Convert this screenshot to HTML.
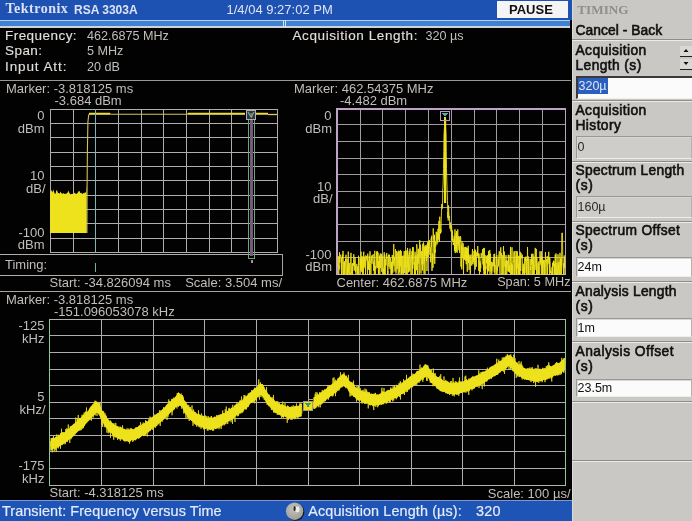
<!DOCTYPE html>
<html><head><meta charset="utf-8"><style>
html,body{margin:0;padding:0;}
body{width:692px;height:521px;overflow:hidden;background:#030202;position:relative;font-family:"Liberation Sans",sans-serif;}
.t{position:absolute;white-space:nowrap;}
</style></head><body>
<div id="root" style="position:absolute;left:0;top:0;width:692px;height:521px;overflow:hidden;filter:blur(0.3px)">
<svg width="692" height="521" viewBox="0 0 692 521" style="position:absolute;left:0;top:0" shape-rendering="crispEdges"><rect x="0.00" y="0.00" width="572.00" height="20.00" fill="#1d52b3"/><rect x="497.00" y="1.00" width="71.00" height="17.00" fill="#f4f4f6"/><rect x="0.00" y="20.00" width="570.00" height="1.00" fill="#b4cff0"/><rect x="0.00" y="21.00" width="570.00" height="5.00" fill="#3f82d4"/><rect x="0.00" y="26.00" width="570.00" height="2.00" fill="#cfd2d6"/><rect x="283.00" y="20.00" width="1.00" height="7.00" fill="#d8e0e8"/><rect x="285.00" y="20.00" width="1.00" height="7.00" fill="#d8e0e8"/><rect x="0.00" y="79.50" width="571.00" height="1.20" fill="#9a9794"/><rect x="50.00" y="109.00" width="1.00" height="144.00" fill="#b0adab"/><rect x="73.00" y="109.00" width="1.00" height="144.00" fill="#b0adab"/><rect x="95.00" y="109.00" width="1.00" height="144.00" fill="#b0adab"/><rect x="118.00" y="109.00" width="1.00" height="144.00" fill="#b0adab"/><rect x="141.00" y="109.00" width="1.00" height="144.00" fill="#b0adab"/><rect x="163.00" y="109.00" width="1.00" height="144.00" fill="#b0adab"/><rect x="186.00" y="109.00" width="1.00" height="144.00" fill="#b0adab"/><rect x="209.00" y="109.00" width="1.00" height="144.00" fill="#b0adab"/><rect x="231.00" y="109.00" width="1.00" height="144.00" fill="#b0adab"/><rect x="254.00" y="109.00" width="1.00" height="144.00" fill="#b0adab"/><rect x="277.00" y="109.00" width="1.00" height="144.00" fill="#b0adab"/><rect x="50.00" y="109.00" width="228.00" height="1.00" fill="#b0adab"/><rect x="50.00" y="123.00" width="228.00" height="1.00" fill="#b0adab"/><rect x="50.00" y="137.00" width="228.00" height="1.00" fill="#b0adab"/><rect x="50.00" y="152.00" width="228.00" height="1.00" fill="#b0adab"/><rect x="50.00" y="166.00" width="228.00" height="1.00" fill="#b0adab"/><rect x="50.00" y="180.00" width="228.00" height="1.00" fill="#b0adab"/><rect x="50.00" y="195.00" width="228.00" height="1.00" fill="#b0adab"/><rect x="50.00" y="209.00" width="228.00" height="1.00" fill="#b0adab"/><rect x="50.00" y="223.00" width="228.00" height="1.00" fill="#b0adab"/><rect x="50.00" y="238.00" width="228.00" height="1.00" fill="#b0adab"/><rect x="50.00" y="252.00" width="228.00" height="1.00" fill="#b0adab"/><rect x="277.00" y="109.00" width="1.00" height="144.00" fill="#b0adab"/><rect x="0.00" y="254.00" width="283.00" height="1.00" fill="#b0adab"/><rect x="0.00" y="275.00" width="283.00" height="1.00" fill="#b0adab"/><rect x="282.00" y="254.00" width="1.00" height="22.00" fill="#a8a4a2"/><rect x="0.00" y="290.80" width="571.00" height="1.20" fill="#a8a4a2"/><rect x="337.00" y="108.00" width="1.00" height="167.00" fill="#bda3c6"/><rect x="360.00" y="108.00" width="1.00" height="167.00" fill="#9f9c9a"/><rect x="382.00" y="108.00" width="1.00" height="167.00" fill="#9f9c9a"/><rect x="405.00" y="108.00" width="1.00" height="167.00" fill="#9f9c9a"/><rect x="428.00" y="108.00" width="1.00" height="167.00" fill="#9f9c9a"/><rect x="451.00" y="108.00" width="1.00" height="167.00" fill="#9f9c9a"/><rect x="474.00" y="108.00" width="1.00" height="167.00" fill="#9f9c9a"/><rect x="496.00" y="108.00" width="1.00" height="167.00" fill="#9f9c9a"/><rect x="519.00" y="108.00" width="1.00" height="167.00" fill="#9f9c9a"/><rect x="542.00" y="108.00" width="1.00" height="167.00" fill="#9f9c9a"/><rect x="565.00" y="108.00" width="1.00" height="167.00" fill="#bda3c6"/><rect x="337.00" y="108.00" width="229.00" height="1.00" fill="#bda3c6"/><rect x="337.00" y="124.00" width="229.00" height="1.00" fill="#9f9c9a"/><rect x="337.00" y="141.00" width="229.00" height="1.00" fill="#9f9c9a"/><rect x="337.00" y="158.00" width="229.00" height="1.00" fill="#9f9c9a"/><rect x="337.00" y="174.00" width="229.00" height="1.00" fill="#9f9c9a"/><rect x="337.00" y="191.00" width="229.00" height="1.00" fill="#9f9c9a"/><rect x="337.00" y="207.00" width="229.00" height="1.00" fill="#9f9c9a"/><rect x="337.00" y="224.00" width="229.00" height="1.00" fill="#9f9c9a"/><rect x="337.00" y="241.00" width="229.00" height="1.00" fill="#9f9c9a"/><rect x="337.00" y="257.00" width="229.00" height="1.00" fill="#9f9c9a"/><rect x="337.00" y="274.00" width="229.00" height="1.00" fill="#bda3c6"/><rect x="336.00" y="108.00" width="2.00" height="167.00" fill="#bda3c6"/><rect x="565.00" y="108.00" width="1.00" height="167.00" fill="#bda3c6"/><rect x="336.00" y="108.00" width="230.00" height="2.00" fill="#bda3c6"/><rect x="101.00" y="319.00" width="1.00" height="167.00" fill="#b0adab"/><rect x="153.00" y="319.00" width="1.00" height="167.00" fill="#b0adab"/><rect x="204.00" y="319.00" width="1.00" height="167.00" fill="#b0adab"/><rect x="256.00" y="319.00" width="1.00" height="167.00" fill="#b0adab"/><rect x="308.00" y="319.00" width="1.00" height="167.00" fill="#b0adab"/><rect x="359.00" y="319.00" width="1.00" height="167.00" fill="#b0adab"/><rect x="411.00" y="319.00" width="1.00" height="167.00" fill="#b0adab"/><rect x="462.00" y="319.00" width="1.00" height="167.00" fill="#b0adab"/><rect x="514.00" y="319.00" width="1.00" height="167.00" fill="#b0adab"/><rect x="49.00" y="335.00" width="517.00" height="1.00" fill="#b0adab"/><rect x="49.00" y="352.00" width="517.00" height="1.00" fill="#b0adab"/><rect x="49.00" y="369.00" width="517.00" height="1.00" fill="#b0adab"/><rect x="49.00" y="385.00" width="517.00" height="1.00" fill="#b0adab"/><rect x="49.00" y="402.00" width="517.00" height="1.00" fill="#b0adab"/><rect x="49.00" y="418.00" width="517.00" height="1.00" fill="#b0adab"/><rect x="49.00" y="435.00" width="517.00" height="1.00" fill="#b0adab"/><rect x="49.00" y="451.00" width="517.00" height="1.00" fill="#b0adab"/><rect x="49.00" y="468.00" width="517.00" height="1.00" fill="#b0adab"/><rect x="49.00" y="319.00" width="517.00" height="1.00" fill="#b0b4ac"/><rect x="49.00" y="485.00" width="517.00" height="1.00" fill="#b0b4ac"/><rect x="49.00" y="319.00" width="1.00" height="167.00" fill="#90c49a"/><rect x="565.00" y="319.00" width="1.00" height="167.00" fill="#90c49a"/><rect x="0.00" y="500.00" width="572.00" height="21.00" fill="#1e54b6"/><rect x="0.00" y="500.00" width="572.00" height="1.00" fill="#7f98cc"/><polygon points="50,233 50.0,189.2 50.8,192.6 51.6,189.7 52.4,192.6 53.2,189.4 54.0,191.5 54.8,193.8 55.6,193.7 56.4,189.9 57.2,190.7 58.0,193.1 58.8,192.9 59.6,193.8 60.4,191.4 61.2,192.9 62.0,193.4 62.8,193.7 63.6,193.1 64.4,193.9 65.2,193.6 66.0,194.3 66.8,193.1 67.6,192.7 68.4,190.5 69.2,192.6 70.0,194.0 70.8,194.3 71.6,193.9 72.4,193.7 73.2,194.2 74.0,193.4 74.8,192.6 75.6,193.8 76.4,194.1 77.2,193.3 78.0,192.5 78.8,190.7 79.6,191.3 80.4,193.3 81.2,192.7 82.0,193.6 82.8,194.1 83.6,193.1 84.4,193.2 85.2,191.9 86.0,193.0 86.7,185 86.7,233" fill="#eee21c" shape-rendering="auto"/><path d="M86.9 233 L87.1 186 L87.4 150 L87.9 122 L88.7 115 L90 113.8 L110 113.8 L111 114.3 L187 114.3 L188 113.8 L245 113.8" stroke="#cfc55a" stroke-width="1.1" fill="none" shape-rendering="auto"/><path d="M89 113.7 L110 113.7 M188 113.7 L245 113.7 M256 113.7 L268 113.7" stroke="#e8dc40" stroke-width="1.9" fill="none" shape-rendering="auto"/><path d="M268 114.5 L277 114.5" stroke="#d8ce50" stroke-width="1.3" fill="none" shape-rendering="auto"/><rect x="95.00" y="109.00" width="1.00" height="142.00" fill="#7fb3b3"/><rect x="95.00" y="263.00" width="1.00" height="9.00" fill="#70b0a8"/><rect x="248.00" y="119.00" width="1.00" height="140.00" fill="#6aa878"/><rect x="254.00" y="119.00" width="1.00" height="140.00" fill="#6aa878"/><rect x="248.00" y="258.00" width="7.00" height="1.00" fill="#6aa878"/><rect x="250.00" y="119.00" width="3.00" height="137.00" fill="#765a7e"/><rect x="251.00" y="260.00" width="2.00" height="3.00" fill="#c080a8"/><rect x="246.5" y="110.5" width="9" height="8.5" fill="#2a3a3a" stroke="#b8aab8" stroke-width="1"/><path d="M248 112 L251 117 M254 112 L251 117" stroke="#70b890" stroke-width="1.2" fill="none" shape-rendering="auto"/><path d="M250 114 L252.5 114 L251.5 118" stroke="#b080a8" stroke-width="1" fill="none" shape-rendering="auto"/><polyline points="338.00,267.28 338.25,256.24 338.50,262.25 338.75,274.50 339.00,265.51 339.25,269.44 339.50,252.31 339.75,262.73 340.00,257.36 340.25,256.80 340.50,255.39 340.75,254.69 341.00,256.39 341.25,267.87 341.50,274.50 341.75,257.63 342.00,274.50 342.25,264.75 342.50,254.47 342.75,258.24 343.00,250.90 343.25,256.38 343.50,274.50 343.75,269.92 344.00,262.15 344.25,274.50 344.50,261.37 344.75,272.94 345.00,274.05 345.25,273.12 345.50,259.36 345.75,261.90 346.00,254.76 346.25,274.50 346.50,274.50 346.75,274.50 347.00,259.23 347.25,258.80 347.50,274.50 347.75,264.60 348.00,272.59 348.25,251.59 348.50,264.57 348.75,274.50 349.00,274.50 349.25,262.85 349.50,270.61 349.75,274.50 350.00,272.76 350.25,274.50 350.50,261.75 350.75,257.68 351.00,252.87 351.25,263.54 351.50,273.28 351.75,274.50 352.00,267.10 352.25,263.21 352.50,274.50 352.75,267.02 353.00,263.24 353.25,265.07 353.50,265.58 353.75,254.26 354.00,258.33 354.25,270.58 354.50,261.21 354.75,266.33 355.00,257.27 355.25,259.68 355.50,271.80 355.75,266.47 356.00,274.50 356.25,267.71 356.50,265.29 356.75,263.91 357.00,264.49 357.25,269.88 357.50,274.50 357.75,266.40 358.00,273.60 358.25,274.50 358.50,255.69 358.75,274.50 359.00,274.50 359.25,274.50 359.50,274.50 359.75,274.50 360.00,258.10 360.25,265.34 360.50,258.68 360.75,270.44 361.00,251.63 361.25,267.95 361.50,256.65 361.75,272.18 362.00,257.20 362.25,256.35 362.50,260.04 362.75,274.50 363.00,259.81 363.25,274.50 363.50,256.97 363.75,251.76 364.00,268.19 364.25,256.88 364.50,256.65 364.75,263.88 365.00,266.19 365.25,259.95 365.50,274.50 365.75,255.44 366.00,260.62 366.25,260.31 366.50,258.22 366.75,255.99 367.00,255.95 367.25,265.97 367.50,274.50 367.75,253.63 368.00,262.31 368.25,269.28 368.50,261.21 368.75,269.73 369.00,262.49 369.25,256.18 369.50,274.50 369.75,257.73 370.00,251.27 370.25,259.09 370.50,263.59 370.75,274.50 371.00,274.50 371.25,259.06 371.50,260.30 371.75,255.50 372.00,263.83 372.25,258.19 372.50,255.46 372.75,256.38 373.00,255.75 373.25,254.22 373.50,270.51 373.75,269.59 374.00,261.78 374.25,274.50 374.50,274.50 374.75,250.81 375.00,272.04 375.25,274.50 375.50,271.80 375.75,266.13 376.00,268.57 376.25,258.41 376.50,251.53 376.75,265.44 377.00,267.07 377.25,263.77 377.50,251.32 377.75,267.84 378.00,252.50 378.25,269.60 378.50,274.50 378.75,261.28 379.00,268.37 379.25,266.67 379.50,255.70 379.75,274.50 380.00,265.41 380.25,253.51 380.50,268.05 380.75,264.14 381.00,262.96 381.25,253.78 381.50,254.88 381.75,271.74 382.00,262.50 382.25,257.60 382.50,257.59 382.75,256.40 383.00,274.50 383.25,274.50 383.50,268.54 383.75,273.71 384.00,254.76 384.25,252.30 384.50,274.50 384.75,254.52 385.00,272.01 385.25,274.50 385.50,258.86 385.75,260.97 386.00,265.48 386.25,261.71 386.50,254.82 386.75,252.94 387.00,258.28 387.25,256.87 387.50,274.50 387.75,271.07 388.00,273.83 388.25,264.35 388.50,254.68 388.75,262.03 389.00,266.63 389.25,254.62 389.50,255.67 389.75,259.63 390.00,268.97 390.25,257.93 390.50,258.70 390.75,260.63 391.00,274.50 391.25,262.90 391.50,273.37 391.75,261.78 392.00,274.50 392.25,254.93 392.50,257.72 392.75,272.75 393.00,260.86 393.25,263.38 393.50,259.24 393.75,244.17 394.00,265.88 394.25,256.81 394.50,257.39 394.75,261.47 395.00,271.52 395.25,253.88 395.50,249.23 395.75,253.69 396.00,273.61 396.25,271.62 396.50,257.24 396.75,251.01 397.00,268.00 397.25,269.11 397.50,263.71 397.75,252.38 398.00,258.20 398.25,274.50 398.50,254.77 398.75,250.55 399.00,264.80 399.25,251.13 399.50,272.15 399.75,256.74 400.00,274.26 400.25,258.10 400.50,249.97 400.75,266.32 401.00,256.50 401.25,251.18 401.50,274.50 401.75,256.05 402.00,258.06 402.25,256.48 402.50,268.60 402.75,273.80 403.00,255.64 403.25,260.19 403.50,273.66 403.75,274.50 404.00,254.81 404.25,251.09 404.50,267.72 404.75,273.08 405.00,255.46 405.25,267.94 405.50,250.91 405.75,254.89 406.00,250.84 406.25,274.50 406.50,269.44 406.75,259.70 407.00,250.34 407.25,274.50 407.50,247.94 407.75,251.59 408.00,266.86 408.25,257.09 408.50,272.40 408.75,255.36 409.00,256.33 409.25,251.32 409.50,270.84 409.75,271.49 410.00,248.62 410.25,257.29 410.50,258.14 410.75,270.67 411.00,274.50 411.25,266.24 411.50,255.56 411.75,256.17 412.00,251.01 412.25,274.50 412.50,247.24 412.75,268.63 413.00,253.71 413.25,247.21 413.50,252.93 413.75,261.33 414.00,264.48 414.25,262.23 414.50,274.50 414.75,255.20 415.00,251.70 415.25,252.44 415.50,274.50 415.75,255.30 416.00,257.71 416.25,265.19 416.50,270.14 416.75,244.20 417.00,248.54 417.25,249.49 417.50,274.50 417.75,253.99 418.00,255.57 418.25,263.57 418.50,248.79 418.75,259.32 419.00,271.10 419.25,274.50 419.50,249.98 419.75,240.32 420.00,249.78 420.25,256.97 420.50,244.82 420.75,247.68 421.00,273.52 421.25,251.25 421.50,251.25 421.75,252.07 422.00,264.40 422.25,252.01 422.50,270.44 422.75,243.78 423.00,264.51 423.25,247.77 423.50,242.40 423.75,243.65 424.00,273.65 424.25,246.53 424.50,261.79 424.75,247.77 425.00,274.50 425.25,245.21 425.50,250.87 425.75,256.00 426.00,245.94 426.25,246.74 426.50,261.06 426.75,245.49 427.00,271.01 427.25,243.97 427.50,256.73 427.75,242.32 428.00,257.03 428.25,240.84 428.50,253.14 428.75,248.00 429.00,247.85 429.25,248.04 429.50,240.22 429.75,248.47 430.00,254.99 430.25,247.20 430.50,262.23 430.75,261.78 431.00,247.57 431.25,237.71 431.50,247.05 431.75,235.69 432.00,270.85 432.25,253.35 432.50,263.65 432.75,254.94 433.00,267.77 433.25,228.36 433.50,239.35 433.75,236.94 434.00,252.33 434.25,259.80 434.50,234.80 434.75,263.81 435.00,249.59 435.25,252.46 435.50,242.42 435.75,246.46 436.00,239.78 436.25,231.75 436.50,239.13 436.75,241.48 437.00,244.41 437.25,232.43 437.50,232.94 437.75,242.40 438.00,228.92 438.25,239.68 438.50,233.35 438.75,224.63 439.00,220.92 439.25,233.93 439.50,241.94 439.75,216.70 440.00,220.72 440.25,223.63 440.50,233.60 440.75,229.27 441.00,232.46 441.25,219.30 441.50,211.14 441.75,204.19 442.00,208.01 442.25,208.55 442.50,207.89 442.75,189.00 443.00,186.11 443.25,179.17 443.50,168.33 443.75,151.67 444.00,135.00 444.25,130.75 444.50,126.50 444.75,122.25 445.00,118.00 445.25,122.25 445.50,126.50 445.75,130.75 446.00,135.00 446.25,151.67 446.50,168.33 446.75,179.17 447.00,186.11 447.25,192.99 447.50,200.71 447.75,217.72 448.00,212.01 448.25,220.50 448.50,205.42 448.75,207.94 449.00,217.85 449.25,215.84 449.50,216.67 449.75,225.79 450.00,228.65 450.25,222.45 450.50,225.78 450.75,228.31 451.00,231.42 451.25,226.48 451.50,225.31 451.75,228.03 452.00,239.87 452.25,230.56 452.50,231.28 452.75,241.86 453.00,238.68 453.25,245.09 453.50,243.16 453.75,244.39 454.00,242.55 454.25,235.82 454.50,251.08 454.75,234.81 455.00,229.36 455.25,253.07 455.50,244.83 455.75,247.53 456.00,233.28 456.25,252.17 456.50,231.08 456.75,234.81 457.00,251.76 457.25,252.60 457.50,240.90 457.75,229.45 458.00,244.37 458.25,236.16 458.50,242.87 458.75,247.15 459.00,250.17 459.25,236.49 459.50,252.91 459.75,242.24 460.00,240.47 460.25,241.98 460.50,236.24 460.75,237.87 461.00,266.77 461.25,244.70 461.50,245.43 461.75,269.40 462.00,241.30 462.25,258.09 462.50,247.99 462.75,249.09 463.00,243.71 463.25,243.26 463.50,274.50 463.75,249.86 464.00,247.22 464.25,253.85 464.50,259.66 464.75,250.31 465.00,246.95 465.25,257.97 465.50,247.39 465.75,261.05 466.00,246.89 466.25,264.27 466.50,248.17 466.75,259.62 467.00,247.74 467.25,271.82 467.50,248.05 467.75,248.63 468.00,260.78 468.25,245.79 468.50,262.72 468.75,253.95 469.00,269.88 469.25,269.11 469.50,263.02 469.75,255.85 470.00,255.09 470.25,273.96 470.50,266.61 470.75,257.99 471.00,254.55 471.25,261.91 471.50,263.37 471.75,265.58 472.00,260.15 472.25,252.76 472.50,249.07 472.75,264.09 473.00,260.26 473.25,255.50 473.50,260.26 473.75,261.70 474.00,251.02 474.25,264.58 474.50,257.50 474.75,249.21 475.00,251.05 475.25,269.42 475.50,250.32 475.75,259.20 476.00,258.62 476.25,266.74 476.50,256.51 476.75,252.59 477.00,256.32 477.25,251.33 477.50,255.73 477.75,246.10 478.00,257.33 478.25,255.96 478.50,253.55 478.75,270.80 479.00,253.65 479.25,257.21 479.50,274.50 479.75,263.07 480.00,261.40 480.25,272.07 480.50,263.49 480.75,268.19 481.00,255.89 481.25,252.98 481.50,257.32 481.75,255.66 482.00,255.50 482.25,254.37 482.50,249.19 482.75,260.56 483.00,264.45 483.25,258.18 483.50,270.33 483.75,247.97 484.00,274.50 484.25,247.94 484.50,253.92 484.75,274.50 485.00,254.91 485.25,269.26 485.50,274.50 485.75,266.09 486.00,269.22 486.25,255.76 486.50,262.77 486.75,260.67 487.00,263.38 487.25,256.50 487.50,274.50 487.75,254.98 488.00,262.12 488.25,271.41 488.50,250.92 488.75,270.83 489.00,260.40 489.25,254.08 489.50,265.56 489.75,249.94 490.00,274.50 490.25,261.97 490.50,253.68 490.75,265.38 491.00,271.58 491.25,261.82 491.50,269.17 491.75,274.50 492.00,270.70 492.25,270.75 492.50,262.58 492.75,262.67 493.00,266.28 493.25,258.84 493.50,258.22 493.75,265.84 494.00,254.01 494.25,272.48 494.50,254.16 494.75,253.76 495.00,274.50 495.25,269.94 495.50,265.40 495.75,265.79 496.00,265.06 496.25,256.78 496.50,261.83 496.75,255.00 497.00,274.50 497.25,266.63 497.50,271.01 497.75,264.36 498.00,258.61 498.25,258.96 498.50,266.37 498.75,254.53 499.00,254.38 499.25,251.19 499.50,254.17 499.75,265.23 500.00,274.50 500.25,261.10 500.50,252.04 500.75,247.34 501.00,255.14 501.25,255.75 501.50,253.03 501.75,274.50 502.00,272.23 502.25,255.18 502.50,268.39 502.75,274.42 503.00,274.50 503.25,254.43 503.50,246.21 503.75,269.00 504.00,274.50 504.25,251.57 504.50,256.25 504.75,260.38 505.00,266.56 505.25,260.90 505.50,274.50 505.75,265.07 506.00,255.15 506.25,268.51 506.50,259.86 506.75,274.50 507.00,266.00 507.25,261.98 507.50,260.87 507.75,266.07 508.00,271.39 508.25,254.75 508.50,261.94 508.75,271.67 509.00,255.16 509.25,271.59 509.50,265.48 509.75,272.70 510.00,268.32 510.25,260.45 510.50,246.94 510.75,274.50 511.00,266.44 511.25,263.11 511.50,274.50 511.75,263.02 512.00,247.30 512.25,274.14 512.50,264.51 512.75,266.14 513.00,274.50 513.25,261.01 513.50,261.88 513.75,257.01 514.00,251.43 514.25,271.32 514.50,274.50 514.75,255.37 515.00,250.92 515.25,259.12 515.50,262.54 515.75,270.90 516.00,274.50 516.25,255.66 516.50,274.50 516.75,251.03 517.00,274.50 517.25,251.44 517.50,259.20 517.75,267.79 518.00,268.54 518.25,263.25 518.50,274.50 518.75,255.85 519.00,261.21 519.25,274.50 519.50,256.00 519.75,269.69 520.00,274.50 520.25,251.87 520.50,260.24 520.75,271.02 521.00,253.13 521.25,257.89 521.50,257.50 521.75,255.83 522.00,258.40 522.25,254.69 522.50,274.50 522.75,274.50 523.00,273.45 523.25,263.71 523.50,272.97 523.75,267.93 524.00,274.50 524.25,266.14 524.50,274.50 524.75,257.94 525.00,273.53 525.25,258.16 525.50,260.97 525.75,257.32 526.00,256.54 526.25,269.04 526.50,274.50 526.75,258.76 527.00,274.50 527.25,274.50 527.50,247.06 527.75,260.49 528.00,256.13 528.25,261.46 528.50,274.50 528.75,258.50 529.00,274.50 529.25,274.50 529.50,274.50 529.75,274.50 530.00,264.87 530.25,258.87 530.50,270.08 530.75,266.96 531.00,274.50 531.25,270.45 531.50,254.38 531.75,264.83 532.00,253.68 532.25,258.53 532.50,262.04 532.75,274.50 533.00,253.84 533.25,274.50 533.50,261.09 533.75,262.36 534.00,256.66 534.25,274.50 534.50,265.32 534.75,265.89 535.00,253.85 535.25,247.91 535.50,254.14 535.75,266.84 536.00,270.00 536.25,248.92 536.50,274.50 536.75,257.53 537.00,257.76 537.25,274.21 537.50,274.50 537.75,274.50 538.00,263.24 538.25,265.64 538.50,274.50 538.75,261.50 539.00,261.43 539.25,274.50 539.50,274.50 539.75,273.87 540.00,251.34 540.25,263.30 540.50,262.05 540.75,256.82 541.00,265.18 541.25,251.29 541.50,268.28 541.75,274.50 542.00,256.42 542.25,260.07 542.50,260.22 542.75,274.50 543.00,259.79 543.25,263.58 543.50,260.51 543.75,268.66 544.00,274.50 544.25,260.14 544.50,265.89 544.75,274.50 545.00,262.99 545.25,259.67 545.50,251.97 545.75,268.75 546.00,274.50 546.25,267.82 546.50,260.99 546.75,259.28 547.00,262.51 547.25,256.25 547.50,274.32 547.75,266.46 548.00,260.49 548.25,260.70 548.50,258.20 548.75,251.80 549.00,263.76 549.25,257.44 549.50,274.50 549.75,258.15 550.00,261.88 550.25,267.94 550.50,273.24 550.75,271.06 551.00,271.61 551.25,272.28 551.50,274.50 551.75,274.50 552.00,267.20 552.25,274.50 552.50,263.31 552.75,274.50 553.00,262.48 553.25,264.20 553.50,260.70 553.75,266.48 554.00,261.28 554.25,274.04 554.50,263.90 554.75,274.50 555.00,267.12 555.25,254.63 555.50,274.50 555.75,274.50 556.00,253.43 556.25,272.02 556.50,274.50 556.75,265.60 557.00,262.72 557.25,267.46 557.50,274.50 557.75,265.80 558.00,254.27 558.25,274.50 558.50,264.91 558.75,268.21 559.00,261.76 559.25,273.17 559.50,274.50 559.75,265.52 560.00,252.84 560.25,274.50 560.50,258.27 560.75,265.50 561.00,258.81 561.25,274.50 561.50,274.50 561.75,233.00 562.00,233.00 562.25,233.00 562.50,233.00 562.75,258.97 563.00,266.51 563.25,268.81 563.50,274.50 563.75,263.25 564.00,274.50 564.25,255.47 564.50,267.97 564.75,256.92" stroke="#eee21c" stroke-width="0.9" fill="none" shape-rendering="auto"/><rect x="444" y="119" width="2.2" height="84" fill="#eee21c" shape-rendering="auto"/><rect x="440.5" y="111.5" width="9" height="9" fill="none" stroke="#b79bc6" stroke-width="1"/><path d="M442 113 L448 113 L445 117 Z" fill="#50b0a8"/><rect x="444.3" y="117" width="1.6" height="3" fill="#eee21c"/><polygon points="50.50,438.07 51.50,438.14 52.50,437.85 53.50,437.38 54.50,438.01 55.50,436.69 56.50,436.27 57.50,436.58 58.50,436.15 59.50,435.04 60.50,433.52 61.50,434.19 62.50,433.61 63.50,431.99 64.50,432.34 65.50,431.61 66.50,429.98 67.50,428.95 68.50,429.22 69.50,428.29 70.50,426.48 71.50,425.67 72.50,424.98 73.50,423.83 74.50,423.38 75.50,421.96 76.50,422.26 77.50,420.39 78.50,419.51 79.50,418.14 80.50,417.65 81.50,417.24 82.50,415.53 83.50,414.28 84.50,414.38 85.50,412.25 86.50,412.08 87.50,411.38 88.50,410.28 89.50,408.02 90.50,406.75 91.50,405.83 92.50,405.21 93.50,403.51 94.50,402.29 95.50,400.97 96.50,401.25 97.50,401.95 98.50,402.80 99.50,403.94 100.50,405.91 101.50,409.26 102.50,410.92 103.50,412.56 104.50,414.12 105.50,414.94 106.50,416.59 107.50,418.65 108.50,419.33 109.50,421.00 110.50,422.13 111.50,422.10 112.50,423.58 113.50,423.83 114.50,425.02 115.50,425.01 116.50,425.77 117.50,426.05 118.50,427.72 119.50,427.86 120.50,427.20 121.50,427.84 122.50,428.49 123.50,428.71 124.50,428.80 125.50,429.70 126.50,429.42 127.50,430.23 128.50,429.16 129.50,430.32 130.50,428.94 131.50,429.56 132.50,428.65 133.50,429.15 134.50,428.95 135.50,427.19 136.50,427.22 137.50,427.43 138.50,425.74 139.50,425.74 140.50,425.61 141.50,425.26 142.50,424.06 143.50,423.84 144.50,422.91 145.50,421.65 146.50,420.85 147.50,421.39 148.50,420.27 149.50,419.71 150.50,418.36 151.50,417.79 152.50,416.78 153.50,415.90 154.50,415.97 155.50,414.49 156.50,414.00 157.50,413.03 158.50,413.04 159.50,411.68 160.50,411.22 161.50,410.25 162.50,409.22 163.50,407.99 164.50,407.67 165.50,405.89 166.50,404.82 167.50,404.00 168.50,403.72 169.50,401.81 170.50,401.40 171.50,399.94 172.50,398.69 173.50,398.87 174.50,397.80 175.50,396.53 176.50,395.37 177.50,393.85 178.50,392.85 179.50,393.82 180.50,394.85 181.50,394.91 182.50,396.45 183.50,399.37 184.50,400.35 185.50,402.50 186.50,404.44 187.50,405.57 188.50,406.74 189.50,406.99 190.50,408.26 191.50,409.59 192.50,410.92 193.50,410.47 194.50,412.15 195.50,412.96 196.50,413.97 197.50,413.84 198.50,414.05 199.50,414.18 200.50,414.76 201.50,416.47 202.50,415.35 203.50,415.94 204.50,415.96 205.50,417.61 206.50,417.20 207.50,417.82 208.50,417.66 209.50,417.84 210.50,418.51 211.50,417.41 212.50,417.72 213.50,417.31 214.50,416.59 215.50,416.85 216.50,417.18 217.50,416.88 218.50,415.88 219.50,414.52 220.50,414.91 221.50,414.34 222.50,413.67 223.50,412.83 224.50,413.20 225.50,411.49 226.50,411.30 227.50,411.02 228.50,410.25 229.50,409.51 230.50,408.63 231.50,407.59 232.50,407.48 233.50,407.26 234.50,405.30 235.50,404.81 236.50,404.53 237.50,403.79 238.50,402.91 239.50,401.42 240.50,400.60 241.50,401.04 242.50,399.96 243.50,398.16 244.50,398.27 245.50,397.57 246.50,395.64 247.50,395.37 248.50,393.78 249.50,392.74 250.50,392.32 251.50,391.74 252.50,390.33 253.50,389.57 254.50,388.92 255.50,387.85 256.50,387.36 257.50,386.16 258.50,385.18 259.50,384.27 260.50,383.19 261.50,384.37 262.50,383.77 263.50,385.27 264.50,388.33 265.50,390.30 266.50,390.86 267.50,392.66 268.50,394.25 269.50,394.61 270.50,397.00 271.50,397.67 272.50,398.85 273.50,398.87 274.50,400.31 275.50,401.49 276.50,400.90 277.50,401.75 278.50,403.48 279.50,402.67 280.50,404.41 281.50,404.17 282.50,404.20 283.50,404.95 284.50,405.64 285.50,405.51 286.50,406.70 287.50,405.60 288.50,406.35 289.50,406.92 290.50,406.71 291.50,407.13 292.50,406.21 293.50,407.63 294.50,406.06 295.50,405.99 296.50,406.05 297.50,405.82 298.50,406.07 299.50,404.21 300.50,404.97 301.50,404.55 301.50,415.92 300.50,416.74 299.50,416.65 298.50,417.73 297.50,417.35 296.50,417.26 295.50,417.59 294.50,418.50 293.50,417.72 292.50,418.51 291.50,418.34 290.50,417.75 289.50,418.22 288.50,418.12 287.50,417.40 286.50,417.81 285.50,416.92 284.50,416.39 283.50,417.32 282.50,416.90 281.50,415.90 280.50,415.79 279.50,414.51 278.50,414.97 277.50,413.91 276.50,413.03 275.50,413.32 274.50,412.15 273.50,411.64 272.50,409.96 271.50,408.84 270.50,407.62 269.50,406.35 268.50,405.10 267.50,404.89 266.50,402.36 265.50,401.50 264.50,398.83 263.50,397.59 262.50,396.27 261.50,395.61 260.50,395.37 259.50,394.74 258.50,396.65 257.50,397.11 256.50,397.83 255.50,400.02 254.50,400.92 253.50,401.91 252.50,402.58 251.50,402.73 250.50,403.35 249.50,404.63 248.50,406.41 247.50,407.31 246.50,408.50 245.50,408.47 244.50,408.88 243.50,411.16 242.50,411.63 241.50,412.14 240.50,412.78 239.50,413.54 238.50,414.63 237.50,414.65 236.50,415.61 235.50,416.79 234.50,417.60 233.50,417.89 232.50,418.38 231.50,420.33 230.50,419.77 229.50,421.17 228.50,421.59 227.50,422.16 226.50,422.32 225.50,423.88 224.50,423.43 223.50,424.50 222.50,425.54 221.50,426.56 220.50,426.01 219.50,427.11 218.50,427.78 217.50,428.46 216.50,428.72 215.50,429.26 214.50,428.57 213.50,428.67 212.50,429.51 211.50,429.22 210.50,430.24 209.50,429.80 208.50,429.13 207.50,429.18 206.50,428.57 205.50,429.11 204.50,428.90 203.50,428.39 202.50,427.59 201.50,426.66 200.50,426.81 199.50,426.76 198.50,426.10 197.50,424.89 196.50,424.85 195.50,424.88 194.50,424.06 193.50,422.91 192.50,421.57 191.50,420.90 190.50,419.93 189.50,419.62 188.50,417.68 187.50,417.24 186.50,414.83 185.50,414.44 184.50,411.78 183.50,411.07 182.50,407.87 181.50,406.50 180.50,406.00 179.50,405.39 178.50,405.91 177.50,406.01 176.50,406.88 175.50,407.40 174.50,409.82 173.50,409.40 172.50,411.86 171.50,411.38 170.50,412.83 169.50,413.75 168.50,414.91 167.50,415.46 166.50,416.19 165.50,417.60 164.50,418.13 163.50,420.08 162.50,420.71 161.50,420.91 160.50,422.39 159.50,422.91 158.50,423.45 157.50,424.54 156.50,426.39 155.50,426.53 154.50,426.88 153.50,428.42 152.50,428.55 151.50,429.47 150.50,429.65 149.50,431.16 148.50,432.55 147.50,432.12 146.50,433.50 145.50,434.27 144.50,435.18 143.50,435.01 142.50,435.03 141.50,436.54 140.50,437.29 139.50,438.15 138.50,438.71 137.50,438.15 136.50,439.39 135.50,439.76 134.50,440.28 133.50,439.82 132.50,440.03 131.50,440.26 130.50,441.84 129.50,441.13 128.50,442.10 127.50,441.30 126.50,441.31 125.50,441.53 124.50,441.45 123.50,440.83 122.50,439.55 121.50,439.61 120.50,439.00 119.50,438.38 118.50,439.03 117.50,437.54 116.50,437.82 115.50,437.57 114.50,436.69 113.50,435.52 112.50,435.16 111.50,433.31 110.50,432.56 109.50,432.77 108.50,431.73 107.50,429.56 106.50,428.03 105.50,426.93 104.50,425.39 103.50,423.84 102.50,421.64 101.50,420.02 100.50,417.65 99.50,415.67 98.50,414.26 97.50,412.93 96.50,412.41 95.50,413.20 94.50,414.95 93.50,415.69 92.50,416.46 91.50,418.45 90.50,419.27 89.50,419.98 88.50,421.17 87.50,421.78 86.50,423.13 85.50,424.16 84.50,425.93 83.50,426.39 82.50,428.04 81.50,427.86 80.50,428.96 79.50,430.75 78.50,431.03 77.50,431.91 76.50,433.10 75.50,433.65 74.50,435.00 73.50,436.10 72.50,437.01 71.50,438.52 70.50,438.38 69.50,439.01 68.50,440.19 67.50,440.69 66.50,442.10 65.50,442.08 64.50,443.20 63.50,444.07 62.50,445.08 61.50,444.93 60.50,446.54 59.50,446.04 58.50,446.92 57.50,447.68 56.50,447.34 55.50,448.45 54.50,449.09 53.50,448.71 52.50,449.16 51.50,450.37 50.50,450.88" fill="#eee21c" shape-rendering="auto"/><polyline points="50.50,446.69 50.75,441.21 51.00,450.07 51.25,447.08 51.50,448.23 51.75,444.26 52.00,441.75 52.25,452.31 52.50,441.20 52.75,443.53 53.00,439.83 53.25,441.35 53.50,436.06 53.75,442.75 54.00,444.41 54.25,451.47 54.50,440.25 54.75,443.84 55.00,440.53 55.25,444.11 55.50,437.85 55.75,450.02 56.00,446.67 56.25,451.32 56.50,448.32 56.75,434.48 57.00,438.48 57.25,437.60 57.50,437.20 57.75,447.15 58.00,436.87 58.25,448.39 58.50,434.82 58.75,446.78 59.00,435.41 59.25,441.35 59.50,442.77 59.75,436.12 60.00,444.14 60.25,438.76 60.50,448.70 60.75,432.98 61.00,437.22 61.25,441.07 61.50,428.72 61.75,440.24 62.00,432.35 62.25,442.35 62.50,432.60 62.75,433.18 63.00,432.21 63.25,437.11 63.50,439.45 63.75,440.32 64.00,435.19 64.25,433.90 64.50,441.41 64.75,434.33 65.00,444.31 65.25,433.50 65.50,443.39 65.75,429.05 66.00,438.69 66.25,434.05 66.50,431.82 66.75,428.23 67.00,428.89 67.25,436.23 67.50,441.88 67.75,429.67 68.00,438.42 68.25,424.50 68.50,430.50 68.75,434.20 69.00,431.65 69.25,433.21 69.50,439.75 69.75,443.00 70.00,431.72 70.25,426.32 70.50,431.43 70.75,439.36 71.00,428.19 71.25,428.57 71.50,427.88 71.75,435.70 72.00,428.48 72.25,427.02 72.50,425.90 72.75,436.51 73.00,434.51 73.25,427.16 73.50,430.03 73.75,424.88 74.00,431.29 74.25,430.79 74.50,424.95 74.75,427.01 75.00,434.43 75.25,434.22 75.50,421.01 75.75,417.58 76.00,422.69 76.25,421.65 76.50,430.32 76.75,424.87 77.00,430.36 77.25,418.90 77.50,431.04 77.75,419.34 78.00,422.05 78.25,414.93 78.50,422.86 78.75,419.64 79.00,419.64 79.25,420.05 79.50,419.34 79.75,424.45 80.00,421.97 80.25,430.32 80.50,419.38 80.75,429.28 81.00,419.76 81.25,430.13 81.50,422.84 81.75,423.32 82.00,414.77 82.25,424.28 82.50,422.44 82.75,428.78 83.00,424.50 83.25,418.17 83.50,427.87 83.75,418.68 84.00,414.74 84.25,412.38 84.50,426.12 84.75,421.07 85.00,415.18 85.25,413.02 85.50,422.91 85.75,411.48 86.00,415.39 86.25,418.54 86.50,407.54 86.75,422.63 87.00,418.39 87.25,412.68 87.50,420.15 87.75,419.40 88.00,416.31 88.25,418.33 88.50,417.32 88.75,410.88 89.00,411.24 89.25,414.13 89.50,414.59 89.75,409.74 90.00,420.20 90.25,413.78 90.50,417.90 90.75,407.88 91.00,411.97 91.25,417.27 91.50,420.54 91.75,416.78 92.00,405.71 92.25,407.38 92.50,408.69 92.75,410.91 93.00,404.03 93.25,417.56 93.50,408.95 93.75,413.96 94.00,403.82 94.25,406.82 94.50,404.57 94.75,405.83 95.00,400.64 95.25,415.39 95.50,410.69 95.75,404.61 96.00,412.26 96.25,409.15 96.50,402.44 96.75,411.51 97.00,415.93 97.25,405.22 97.50,404.20 97.75,409.84 98.00,405.60 98.25,409.30 98.50,403.66 98.75,412.01 99.00,411.73 99.25,403.11 99.50,408.21 99.75,410.59 100.00,401.86 100.25,411.24 100.50,417.53 100.75,412.52 101.00,412.54 101.25,414.16 101.50,417.09 101.75,424.73 102.00,416.32 102.25,420.09 102.50,426.73 102.75,410.87 103.00,421.23 103.25,411.06 103.50,421.47 103.75,411.92 104.00,417.86 104.25,427.09 104.50,425.57 104.75,417.79 105.00,413.18 105.25,417.64 105.50,418.59 105.75,427.25 106.00,422.31 106.25,415.67 106.50,428.40 106.75,428.58 107.00,432.63 107.25,421.88 107.50,423.94 107.75,422.37 108.00,420.15 108.25,433.25 108.50,425.78 108.75,426.55 109.00,422.39 109.25,422.93 109.50,430.96 109.75,425.93 110.00,426.03 110.25,420.39 110.50,437.80 110.75,421.08 111.00,422.95 111.25,428.97 111.50,428.23 111.75,431.14 112.00,424.30 112.25,423.51 112.50,424.64 112.75,423.14 113.00,436.34 113.25,432.09 113.50,436.03 113.75,439.83 114.00,423.26 114.25,427.26 114.50,431.82 114.75,431.66 115.00,437.16 115.25,436.25 115.50,435.77 115.75,422.85 116.00,433.66 116.25,432.36 116.50,431.27 116.75,430.88 117.00,426.23 117.25,426.48 117.50,439.90 117.75,432.88 118.00,430.30 118.25,432.68 118.50,426.67 118.75,438.51 119.00,433.71 119.25,427.73 119.50,439.29 119.75,429.28 120.00,426.42 120.25,440.74 120.50,440.49 120.75,427.00 121.00,433.17 121.25,437.72 121.50,438.50 121.75,427.67 122.00,428.16 122.25,438.77 122.50,425.43 122.75,428.45 123.00,429.06 123.25,432.49 123.50,437.29 123.75,429.87 124.00,432.40 124.25,440.71 124.50,429.78 124.75,440.94 125.00,435.19 125.25,429.51 125.50,430.28 125.75,435.56 126.00,430.92 126.25,431.06 126.50,431.66 126.75,435.68 127.00,428.32 127.25,435.54 127.50,436.81 127.75,431.64 128.00,430.51 128.25,428.64 128.50,436.04 128.75,441.69 129.00,436.93 129.25,437.16 129.50,443.66 129.75,437.15 130.00,428.62 130.25,438.45 130.50,433.08 130.75,434.83 131.00,427.90 131.25,433.93 131.50,428.93 131.75,438.66 132.00,429.73 132.25,429.48 132.50,430.59 132.75,442.00 133.00,439.11 133.25,434.54 133.50,440.69 133.75,436.46 134.00,436.19 134.25,438.54 134.50,437.39 134.75,428.84 135.00,436.50 135.25,428.21 135.50,440.29 135.75,437.26 136.00,438.02 136.25,432.32 136.50,437.51 136.75,430.01 137.00,433.43 137.25,426.99 137.50,437.07 137.75,437.72 138.00,427.86 138.25,428.32 138.50,438.40 138.75,435.26 139.00,436.24 139.25,434.58 139.50,436.61 139.75,425.25 140.00,436.50 140.25,432.69 140.50,422.15 140.75,423.61 141.00,435.57 141.25,432.27 141.50,428.03 141.75,428.16 142.00,432.05 142.25,423.83 142.50,433.00 142.75,432.23 143.00,423.87 143.25,422.51 143.50,424.52 143.75,436.13 144.00,424.82 144.25,430.53 144.50,427.09 144.75,435.46 145.00,435.80 145.25,433.24 145.50,420.34 145.75,434.65 146.00,432.42 146.25,425.30 146.50,428.18 146.75,427.42 147.00,433.56 147.25,436.37 147.50,425.85 147.75,424.43 148.00,428.36 148.25,426.51 148.50,432.19 148.75,423.75 149.00,418.91 149.25,428.26 149.50,424.49 149.75,431.05 150.00,416.62 150.25,419.22 150.50,430.51 150.75,425.70 151.00,417.30 151.25,427.76 151.50,420.48 151.75,420.45 152.00,422.23 152.25,425.51 152.50,425.74 152.75,429.90 153.00,425.57 153.25,417.34 153.50,427.24 153.75,419.77 154.00,422.14 154.25,416.56 154.50,416.49 154.75,414.51 155.00,419.32 155.25,427.93 155.50,417.80 155.75,415.90 156.00,419.36 156.25,416.45 156.50,418.15 156.75,416.14 157.00,425.69 157.25,424.40 157.50,423.30 157.75,413.57 158.00,418.19 158.25,421.03 158.50,414.81 158.75,424.36 159.00,414.59 159.25,413.94 159.50,410.40 159.75,418.17 160.00,423.63 160.25,425.92 160.50,420.37 160.75,414.97 161.00,410.17 161.25,418.06 161.50,417.67 161.75,419.59 162.00,421.89 162.25,412.57 162.50,419.40 162.75,409.75 163.00,414.79 163.25,416.65 163.50,408.28 163.75,407.03 164.00,413.43 164.25,415.72 164.50,411.48 164.75,409.28 165.00,416.87 165.25,406.95 165.50,415.89 165.75,417.85 166.00,415.25 166.25,413.59 166.50,405.49 166.75,413.95 167.00,420.03 167.25,415.31 167.50,405.79 167.75,403.74 168.00,416.89 168.25,407.30 168.50,402.69 168.75,399.44 169.00,403.22 169.25,401.77 169.50,409.06 169.75,400.99 170.00,401.82 170.25,409.47 170.50,404.69 170.75,402.72 171.00,402.34 171.25,411.21 171.50,399.13 171.75,398.85 172.00,415.29 172.25,408.94 172.50,403.76 172.75,406.37 173.00,410.36 173.25,409.14 173.50,401.67 173.75,397.50 174.00,398.19 174.25,406.28 174.50,402.56 174.75,398.28 175.00,399.43 175.25,406.07 175.50,401.29 175.75,405.06 176.00,398.15 176.25,404.51 176.50,404.95 176.75,407.31 177.00,408.49 177.25,393.01 177.50,403.52 177.75,396.29 178.00,394.51 178.25,407.00 178.50,392.51 178.75,397.14 179.00,403.87 179.25,393.27 179.50,394.12 179.75,399.01 180.00,405.76 180.25,399.37 180.50,394.30 180.75,401.13 181.00,395.95 181.25,393.47 181.50,404.30 181.75,408.77 182.00,405.34 182.25,407.06 182.50,394.97 182.75,404.61 183.00,396.34 183.25,408.62 183.50,397.79 183.75,413.47 184.00,407.52 184.25,405.82 184.50,402.01 184.75,413.06 185.00,401.28 185.25,402.01 185.50,407.42 185.75,410.54 186.00,418.73 186.25,402.42 186.50,408.04 186.75,413.16 187.00,412.52 187.25,410.15 187.50,417.13 187.75,404.59 188.00,418.95 188.25,410.22 188.50,417.08 188.75,405.07 189.00,419.98 189.25,420.98 189.50,419.84 189.75,416.18 190.00,415.94 190.25,410.49 190.50,407.02 190.75,408.57 191.00,418.03 191.25,419.74 191.50,415.49 191.75,419.90 192.00,405.35 192.25,416.83 192.50,416.23 192.75,417.84 193.00,425.79 193.25,413.63 193.50,409.52 193.75,409.96 194.00,422.12 194.25,411.83 194.50,413.30 194.75,412.00 195.00,418.80 195.25,412.10 195.50,423.75 195.75,412.54 196.00,415.76 196.25,413.56 196.50,426.34 196.75,426.67 197.00,422.28 197.25,419.81 197.50,418.23 197.75,422.03 198.00,423.45 198.25,426.32 198.50,410.45 198.75,425.61 199.00,426.17 199.25,427.27 199.50,423.79 199.75,417.74 200.00,418.22 200.25,420.13 200.50,423.44 200.75,425.20 201.00,428.83 201.25,417.98 201.50,413.59 201.75,427.48 202.00,419.10 202.25,425.98 202.50,426.37 202.75,415.97 203.00,419.24 203.25,420.13 203.50,429.31 203.75,422.79 204.00,422.98 204.25,421.07 204.50,425.44 204.75,416.39 205.00,419.47 205.25,415.38 205.50,426.13 205.75,417.99 206.00,425.82 206.25,426.79 206.50,419.29 206.75,416.00 207.00,418.82 207.25,430.36 207.50,424.75 207.75,424.91 208.00,430.74 208.25,416.15 208.50,418.15 208.75,423.53 209.00,426.52 209.25,427.80 209.50,417.66 209.75,422.37 210.00,422.93 210.25,417.62 210.50,421.40 210.75,416.65 211.00,419.62 211.25,428.37 211.50,415.99 211.75,429.88 212.00,426.11 212.25,426.10 212.50,418.19 212.75,430.89 213.00,425.80 213.25,430.48 213.50,428.71 213.75,430.32 214.00,426.59 214.25,427.51 214.50,421.02 214.75,417.06 215.00,427.38 215.25,420.99 215.50,418.51 215.75,418.35 216.00,420.48 216.25,422.00 216.50,415.50 216.75,427.35 217.00,414.98 217.25,416.19 217.50,425.14 217.75,416.01 218.00,416.75 218.25,420.69 218.50,414.92 218.75,420.91 219.00,429.15 219.25,424.86 219.50,426.65 219.75,426.35 220.00,427.53 220.25,416.71 220.50,426.08 220.75,414.08 221.00,426.73 221.25,428.97 221.50,417.26 221.75,422.38 222.00,413.99 222.25,419.36 222.50,412.07 222.75,410.48 223.00,422.88 223.25,415.05 223.50,420.55 223.75,413.41 224.00,425.44 224.25,423.96 224.50,424.50 224.75,414.08 225.00,424.19 225.25,409.19 225.50,412.33 225.75,421.43 226.00,424.17 226.25,406.55 226.50,413.13 226.75,417.21 227.00,416.76 227.25,418.56 227.50,421.64 227.75,424.00 228.00,412.08 228.25,413.37 228.50,413.54 228.75,408.51 229.00,410.46 229.25,407.83 229.50,411.58 229.75,416.04 230.00,409.42 230.25,408.99 230.50,409.26 230.75,414.76 231.00,422.19 231.25,409.02 231.50,413.18 231.75,419.63 232.00,419.03 232.25,409.87 232.50,423.86 232.75,404.86 233.00,409.64 233.25,418.29 233.50,412.93 233.75,416.97 234.00,412.31 234.25,408.04 234.50,413.06 234.75,417.63 235.00,421.97 235.25,412.26 235.50,413.92 235.75,406.81 236.00,410.99 236.25,403.95 236.50,412.13 236.75,412.67 237.00,402.41 237.25,412.37 237.50,411.72 237.75,416.25 238.00,405.02 238.25,415.84 238.50,407.31 238.75,414.57 239.00,411.87 239.25,410.57 239.50,402.23 239.75,403.35 240.00,400.43 240.25,405.86 240.50,400.66 240.75,413.60 241.00,404.47 241.25,405.51 241.50,396.55 241.75,400.89 242.00,412.87 242.25,410.73 242.50,407.47 242.75,412.30 243.00,409.04 243.25,401.07 243.50,406.11 243.75,410.06 244.00,395.00 244.25,407.36 244.50,396.02 244.75,395.58 245.00,399.71 245.25,395.61 245.50,409.45 245.75,397.28 246.00,402.74 246.25,400.93 246.50,409.30 246.75,396.61 247.00,403.40 247.25,397.69 247.50,404.55 247.75,400.72 248.00,407.14 248.25,393.57 248.50,403.09 248.75,403.24 249.00,404.23 249.25,393.31 249.50,394.56 249.75,403.64 250.00,394.71 250.25,401.04 250.50,392.83 250.75,399.35 251.00,399.90 251.25,393.96 251.50,397.90 251.75,390.03 252.00,392.68 252.25,398.81 252.50,398.19 252.75,391.72 253.00,398.44 253.25,390.52 253.50,399.61 253.75,398.54 254.00,399.48 254.25,391.96 254.50,387.77 254.75,403.34 255.00,388.74 255.25,399.53 255.50,388.95 255.75,393.41 256.00,390.97 256.25,393.25 256.50,401.11 256.75,392.06 257.00,394.63 257.25,389.05 257.50,394.79 257.75,389.37 258.00,397.56 258.25,392.62 258.50,389.89 258.75,379.38 259.00,396.28 259.25,389.28 259.50,399.55 259.75,393.58 260.00,383.08 260.25,383.11 260.50,382.37 260.75,393.34 261.00,396.99 261.25,389.88 261.50,384.42 261.75,393.70 262.00,387.43 262.25,386.19 262.50,384.48 262.75,394.33 263.00,397.17 263.25,398.31 263.50,388.50 263.75,395.49 264.00,387.07 264.25,400.14 264.50,398.41 264.75,390.27 265.00,394.09 265.25,389.65 265.50,392.71 265.75,399.56 266.00,391.51 266.25,401.55 266.50,387.00 266.75,399.06 267.00,404.69 267.25,403.48 267.50,394.99 267.75,396.99 268.00,397.40 268.25,395.44 268.50,398.56 268.75,406.13 269.00,396.67 269.25,405.49 269.50,404.64 269.75,406.23 270.00,404.13 270.25,407.21 270.50,402.92 270.75,407.47 271.00,408.09 271.25,408.88 271.50,410.04 271.75,406.32 272.00,397.00 272.25,404.84 272.50,401.91 272.75,408.87 273.00,400.46 273.25,401.21 273.50,395.05 273.75,412.72 274.00,409.32 274.25,405.28 274.50,410.65 274.75,403.35 275.00,412.43 275.25,412.69 275.50,403.93 275.75,408.09 276.00,408.48 276.25,407.60 276.50,406.21 276.75,410.16 277.00,405.71 277.25,414.93 277.50,402.41 277.75,401.19 278.00,407.38 278.25,407.47 278.50,409.05 278.75,413.21 279.00,404.74 279.25,413.67 279.50,415.04 279.75,408.33 280.00,412.65 280.25,405.05 280.50,407.10 280.75,405.05 281.00,409.93 281.25,404.61 281.50,417.74 281.75,414.73 282.00,416.58 282.25,414.40 282.50,408.45 282.75,401.64 283.00,416.80 283.25,417.75 283.50,417.50 283.75,405.59 284.00,415.71 284.25,412.73 284.50,407.86 284.75,411.55 285.00,403.06 285.25,414.80 285.50,407.58 285.75,411.91 286.00,413.29 286.25,407.27 286.50,415.22 286.75,415.16 287.00,408.54 287.25,422.84 287.50,411.26 287.75,405.65 288.00,414.95 288.25,411.71 288.50,419.94 288.75,416.48 289.00,407.91 289.25,411.17 289.50,409.60 289.75,408.36 290.00,408.01 290.25,412.78 290.50,412.43 290.75,419.95 291.00,419.54 291.25,408.20 291.50,407.40 291.75,406.32 292.00,419.89 292.25,410.57 292.50,410.52 292.75,411.11 293.00,418.26 293.25,405.18 293.50,416.12 293.75,414.57 294.00,411.05 294.25,409.42 294.50,414.90 294.75,419.19 295.00,410.25 295.25,416.65 295.50,414.85 295.75,418.84 296.00,410.52 296.25,406.08 296.50,403.55 296.75,411.45 297.00,409.60 297.25,409.31 297.50,418.03 297.75,411.07 298.00,409.61 298.25,415.58 298.50,409.17 298.75,408.96 299.00,411.54 299.25,408.31 299.50,405.59 299.75,403.38 300.00,403.85 300.25,405.08 300.50,403.62 300.75,413.78 301.00,416.36 301.25,410.79 301.50,403.67 301.75,408.79 302.00,413.45" stroke="#eee21c" stroke-width="0.75" fill="none" shape-rendering="auto"/><polygon points="313.50,397.36 314.50,397.50 315.50,396.41 316.50,394.84 317.50,394.30 318.50,394.55 319.50,392.89 320.50,392.29 321.50,392.35 322.50,391.11 323.50,390.49 324.50,389.44 325.50,389.82 326.50,388.62 327.50,386.99 328.50,386.46 329.50,385.19 330.50,385.37 331.50,384.15 332.50,383.53 333.50,383.18 334.50,381.45 335.50,381.56 336.50,380.64 337.50,378.53 338.50,378.02 339.50,376.52 340.50,376.86 341.50,374.70 342.50,374.43 343.50,374.30 344.50,374.19 345.50,375.71 346.50,376.28 347.50,377.47 348.50,379.76 349.50,380.91 350.50,382.46 351.50,382.51 352.50,383.46 353.50,384.25 354.50,385.66 355.50,387.17 356.50,387.93 357.50,387.37 358.50,388.68 359.50,389.28 360.50,390.38 361.50,390.62 362.50,390.27 363.50,391.65 364.50,391.80 365.50,392.16 366.50,391.48 367.50,392.78 368.50,392.95 369.50,392.75 370.50,393.90 371.50,393.29 372.50,394.10 373.50,393.72 374.50,393.78 375.50,393.97 376.50,394.42 377.50,394.22 378.50,394.55 379.50,393.91 380.50,393.47 381.50,392.55 382.50,391.87 383.50,391.60 384.50,392.51 385.50,391.42 386.50,391.40 387.50,390.36 388.50,389.65 389.50,390.18 390.50,388.69 391.50,388.42 392.50,388.85 393.50,388.08 394.50,387.74 395.50,387.16 396.50,386.69 397.50,385.55 398.50,385.31 399.50,383.49 400.50,383.99 401.50,383.26 402.50,382.16 403.50,382.29 404.50,380.34 405.50,380.29 406.50,378.98 407.50,378.76 408.50,377.72 409.50,377.46 410.50,376.78 411.50,376.51 412.50,375.88 413.50,373.81 414.50,374.36 415.50,372.91 416.50,371.29 417.50,370.64 418.50,370.65 419.50,370.34 420.50,368.58 421.50,368.19 422.50,367.71 423.50,366.06 424.50,365.11 425.50,364.70 426.50,364.59 427.50,366.04 428.50,367.08 429.50,369.15 430.50,370.31 431.50,372.09 432.50,372.82 433.50,372.83 434.50,375.28 435.50,375.53 436.50,376.10 437.50,377.12 438.50,376.88 439.50,377.76 440.50,378.21 441.50,378.99 442.50,379.85 443.50,381.01 444.50,380.97 445.50,381.54 446.50,380.72 447.50,381.27 448.50,381.69 449.50,382.88 450.50,383.18 451.50,382.84 452.50,383.14 453.50,382.71 454.50,382.63 455.50,382.49 456.50,383.11 457.50,382.28 458.50,382.74 459.50,382.24 460.50,381.34 461.50,381.70 462.50,381.93 463.50,381.71 464.50,380.19 465.50,380.30 466.50,380.52 467.50,379.97 468.50,379.21 469.50,379.54 470.50,377.91 471.50,377.30 472.50,376.85 473.50,376.91 474.50,376.56 475.50,375.63 476.50,375.22 477.50,375.67 478.50,374.36 479.50,373.21 480.50,373.94 481.50,372.27 482.50,371.54 483.50,371.40 484.50,371.46 485.50,370.49 486.50,370.14 487.50,369.51 488.50,369.27 489.50,367.55 490.50,366.86 491.50,367.00 492.50,365.77 493.50,365.64 494.50,364.54 495.50,363.90 496.50,362.63 497.50,363.41 498.50,361.28 499.50,361.19 500.50,360.76 501.50,360.25 502.50,359.72 503.50,358.24 504.50,357.51 505.50,357.08 506.50,356.14 507.50,354.52 508.50,355.45 509.50,354.85 510.50,355.87 511.50,356.49 512.50,357.90 513.50,359.01 514.50,360.41 515.50,360.88 516.50,363.05 517.50,362.76 518.50,364.43 519.50,364.59 520.50,364.61 521.50,365.75 522.50,367.29 523.50,367.62 524.50,367.98 525.50,368.53 526.50,368.85 527.50,367.96 528.50,368.71 529.50,368.79 530.50,369.37 531.50,369.09 532.50,369.65 533.50,370.08 534.50,370.01 535.50,370.47 536.50,370.50 537.50,369.58 538.50,369.87 539.50,369.32 540.50,369.77 541.50,369.16 542.50,368.46 543.50,368.41 544.50,368.10 545.50,368.38 546.50,367.24 547.50,367.56 548.50,367.16 549.50,366.19 550.50,365.94 551.50,366.49 552.50,365.60 553.50,365.39 554.50,364.20 555.50,364.48 556.50,363.52 557.50,362.69 558.50,362.92 559.50,362.64 560.50,361.48 561.50,360.76 562.50,360.03 563.50,359.71 564.50,360.25 564.50,371.02 563.50,372.34 562.50,371.59 561.50,373.42 560.50,373.05 559.50,374.27 558.50,374.81 557.50,374.64 556.50,374.93 555.50,375.98 554.50,375.43 553.50,376.07 552.50,377.68 551.50,377.39 550.50,377.01 549.50,377.45 548.50,378.85 547.50,379.19 546.50,379.72 545.50,379.14 544.50,380.33 543.50,379.92 542.50,380.45 541.50,381.16 540.50,381.55 539.50,381.10 538.50,381.25 537.50,382.27 536.50,381.67 535.50,381.96 534.50,381.20 533.50,380.91 532.50,381.11 531.50,381.05 530.50,380.39 529.50,380.61 528.50,380.07 527.50,380.08 526.50,379.83 525.50,379.61 524.50,379.13 523.50,379.03 522.50,377.81 521.50,378.18 520.50,376.28 519.50,376.65 518.50,375.07 517.50,375.51 516.50,374.29 515.50,373.50 514.50,371.31 513.50,371.73 512.50,370.06 511.50,368.65 510.50,367.69 509.50,366.02 508.50,365.95 507.50,367.19 506.50,368.38 505.50,368.70 504.50,368.54 503.50,369.31 502.50,371.13 501.50,371.03 500.50,372.08 499.50,372.32 498.50,373.52 497.50,374.90 496.50,374.99 495.50,375.06 494.50,376.60 493.50,376.53 492.50,377.26 491.50,379.09 490.50,378.29 489.50,379.43 488.50,379.43 487.50,380.20 486.50,381.36 485.50,381.55 484.50,383.02 483.50,382.63 482.50,383.86 481.50,384.62 480.50,385.22 479.50,384.93 478.50,385.54 477.50,386.94 476.50,386.85 475.50,387.09 474.50,388.84 473.50,388.32 472.50,389.34 471.50,389.30 470.50,389.33 469.50,390.63 468.50,390.89 467.50,391.83 466.50,391.25 465.50,391.81 464.50,392.40 463.50,392.37 462.50,392.70 461.50,393.01 460.50,393.01 459.50,394.05 458.50,394.32 457.50,394.43 456.50,395.05 455.50,394.07 454.50,394.05 453.50,395.18 452.50,394.46 451.50,393.65 450.50,394.18 449.50,394.55 448.50,393.77 447.50,392.67 446.50,393.33 445.50,393.38 444.50,391.56 443.50,391.71 442.50,391.15 441.50,391.57 440.50,391.13 439.50,390.41 438.50,388.78 437.50,389.10 436.50,388.48 435.50,386.23 434.50,385.83 433.50,385.03 432.50,383.28 431.50,383.19 430.50,382.30 429.50,380.48 428.50,378.06 427.50,377.08 426.50,376.11 425.50,377.46 424.50,377.78 423.50,378.05 422.50,379.00 421.50,379.64 420.50,381.12 419.50,381.52 418.50,382.14 417.50,382.50 416.50,383.17 415.50,384.13 414.50,385.03 413.50,386.11 412.50,387.51 411.50,387.28 410.50,387.70 409.50,389.39 408.50,389.48 407.50,390.39 406.50,390.53 405.50,391.65 404.50,392.78 403.50,393.83 402.50,394.33 401.50,394.04 400.50,395.39 399.50,396.39 398.50,396.25 397.50,397.00 396.50,397.97 395.50,398.29 394.50,398.23 393.50,398.83 392.50,399.72 391.50,399.75 390.50,400.79 389.50,400.67 388.50,401.17 387.50,402.91 386.50,403.02 385.50,403.03 384.50,402.73 383.50,404.42 382.50,404.18 381.50,405.05 380.50,404.66 379.50,404.54 378.50,405.43 377.50,404.82 376.50,405.05 375.50,405.01 374.50,406.26 373.50,405.97 372.50,405.62 371.50,405.12 370.50,405.59 369.50,405.23 368.50,403.94 367.50,403.57 366.50,403.71 365.50,403.63 364.50,402.65 363.50,402.56 362.50,401.61 361.50,401.14 360.50,400.62 359.50,400.63 358.50,400.81 357.50,399.95 356.50,399.25 355.50,397.43 354.50,396.92 353.50,396.97 352.50,395.62 351.50,394.82 350.50,393.58 349.50,392.56 348.50,391.18 347.50,388.90 346.50,387.41 345.50,387.27 344.50,386.67 343.50,386.15 342.50,386.43 341.50,387.56 340.50,388.03 339.50,389.39 338.50,390.11 337.50,390.18 336.50,391.68 335.50,393.03 334.50,393.15 333.50,394.33 332.50,394.94 331.50,396.32 330.50,395.93 329.50,397.54 328.50,398.68 327.50,398.54 326.50,399.37 325.50,401.46 324.50,401.01 323.50,402.02 322.50,403.70 321.50,404.42 320.50,404.57 319.50,404.57 318.50,406.02 317.50,405.74 316.50,406.47 315.50,408.61 314.50,408.91 313.50,408.49" fill="#eee21c" shape-rendering="auto"/><polyline points="313.50,408.69 313.75,402.08 314.00,407.17 314.25,397.08 314.50,401.79 314.75,403.99 315.00,395.09 315.25,393.73 315.50,406.02 315.75,404.61 316.00,392.02 316.25,403.24 316.50,396.83 316.75,407.44 317.00,402.35 317.25,392.57 317.50,402.90 317.75,400.69 318.00,396.00 318.25,398.92 318.50,406.13 318.75,407.23 319.00,405.08 319.25,400.81 319.50,392.29 319.75,403.85 320.00,403.15 320.25,407.30 320.50,394.46 320.75,402.64 321.00,398.97 321.25,402.61 321.50,394.22 321.75,396.78 322.00,391.29 322.25,389.95 322.50,390.92 322.75,395.93 323.00,393.56 323.25,396.82 323.50,391.36 323.75,396.11 324.00,401.50 324.25,401.56 324.50,393.13 324.75,396.41 325.00,388.93 325.25,393.07 325.50,397.24 325.75,392.05 326.00,399.72 326.25,393.03 326.50,391.97 326.75,388.75 327.00,396.20 327.25,392.07 327.50,397.71 327.75,398.15 328.00,385.02 328.25,399.70 328.50,395.17 328.75,391.88 329.00,387.13 329.25,394.84 329.50,393.89 329.75,393.21 330.00,391.43 330.25,391.85 330.50,390.62 330.75,385.12 331.00,393.18 331.25,392.03 331.50,391.14 331.75,388.97 332.00,390.65 332.25,387.36 332.50,396.35 332.75,391.33 333.00,378.06 333.25,395.76 333.50,384.84 333.75,383.25 334.00,377.38 334.25,386.82 334.50,390.38 334.75,392.81 335.00,393.14 335.25,379.66 335.50,396.15 335.75,380.67 336.00,383.06 336.25,392.38 336.50,391.40 336.75,384.65 337.00,382.01 337.25,389.84 337.50,380.76 337.75,391.14 338.00,386.16 338.25,378.81 338.50,383.46 338.75,383.11 339.00,390.50 339.25,387.06 339.50,379.28 339.75,381.30 340.00,378.36 340.25,380.43 340.50,372.19 340.75,385.70 341.00,379.57 341.25,379.20 341.50,383.69 341.75,381.43 342.00,387.19 342.25,380.70 342.50,375.77 342.75,378.04 343.00,374.02 343.25,382.15 343.50,378.12 343.75,375.74 344.00,372.50 344.25,376.37 344.50,380.93 344.75,382.22 345.00,384.68 345.25,386.14 345.50,383.49 345.75,380.11 346.00,388.24 346.25,375.56 346.50,382.05 346.75,378.07 347.00,381.00 347.25,378.27 347.50,378.76 347.75,384.42 348.00,384.26 348.25,377.22 348.50,374.85 348.75,386.32 349.00,381.30 349.25,382.98 349.50,382.12 349.75,388.82 350.00,396.45 350.25,390.08 350.50,388.24 350.75,381.70 351.00,396.04 351.25,382.01 351.50,382.32 351.75,385.08 352.00,388.55 352.25,393.78 352.50,383.78 352.75,382.42 353.00,384.18 353.25,394.63 353.50,380.57 353.75,389.49 354.00,389.42 354.25,384.77 354.50,391.67 354.75,390.73 355.00,396.92 355.25,387.20 355.50,398.24 355.75,394.93 356.00,392.09 356.25,388.98 356.50,401.52 356.75,399.00 357.00,385.99 357.25,395.57 357.50,393.27 357.75,390.86 358.00,397.52 358.25,396.38 358.50,385.60 358.75,391.85 359.00,392.18 359.25,397.39 359.50,399.36 359.75,395.78 360.00,389.38 360.25,388.79 360.50,388.26 360.75,393.61 361.00,394.14 361.25,394.56 361.50,396.32 361.75,403.20 362.00,395.23 362.25,403.45 362.50,398.66 362.75,394.92 363.00,393.28 363.25,389.79 363.50,402.54 363.75,396.05 364.00,393.65 364.25,397.44 364.50,403.90 364.75,393.35 365.00,388.64 365.25,403.82 365.50,398.90 365.75,391.04 366.00,391.82 366.25,389.34 366.50,392.25 366.75,390.64 367.00,393.86 367.25,391.93 367.50,398.49 367.75,403.17 368.00,394.59 368.25,408.40 368.50,392.38 368.75,397.17 369.00,404.15 369.25,392.07 369.50,400.09 369.75,395.44 370.00,394.11 370.25,395.61 370.50,395.94 370.75,401.21 371.00,403.68 371.25,395.03 371.50,399.34 371.75,402.59 372.00,397.97 372.25,395.92 372.50,405.37 372.75,406.19 373.00,404.28 373.25,395.05 373.50,401.83 373.75,410.09 374.00,394.74 374.25,401.47 374.50,399.17 374.75,393.62 375.00,393.78 375.25,402.08 375.50,392.87 375.75,406.82 376.00,398.69 376.25,402.81 376.50,402.10 376.75,400.86 377.00,395.05 377.25,406.83 377.50,407.22 377.75,404.86 378.00,403.36 378.25,406.29 378.50,405.33 378.75,403.88 379.00,396.60 379.25,403.94 379.50,404.57 379.75,394.25 380.00,400.23 380.25,396.64 380.50,393.81 380.75,394.78 381.00,396.31 381.25,395.83 381.50,390.01 381.75,388.22 382.00,387.74 382.25,394.37 382.50,391.18 382.75,401.52 383.00,398.30 383.25,394.91 383.50,396.12 383.75,403.84 384.00,388.03 384.25,402.48 384.50,398.43 384.75,392.32 385.00,393.92 385.25,392.68 385.50,398.39 385.75,399.12 386.00,403.48 386.25,397.98 386.50,403.36 386.75,390.70 387.00,399.77 387.25,398.74 387.50,403.06 387.75,395.47 388.00,400.13 388.25,390.14 388.50,400.65 388.75,398.63 389.00,390.06 389.25,395.49 389.50,402.31 389.75,394.53 390.00,397.24 390.25,402.29 390.50,388.55 390.75,387.54 391.00,393.40 391.25,393.30 391.50,398.74 391.75,390.37 392.00,394.09 392.25,396.31 392.50,391.27 392.75,401.38 393.00,386.32 393.25,386.80 393.50,398.54 393.75,400.37 394.00,394.46 394.25,385.60 394.50,389.25 394.75,386.13 395.00,390.70 395.25,391.00 395.50,395.83 395.75,393.66 396.00,393.53 396.25,399.28 396.50,384.83 396.75,394.10 397.00,397.83 397.25,397.30 397.50,392.32 397.75,387.89 398.00,392.62 398.25,391.35 398.50,391.56 398.75,391.39 399.00,383.08 399.25,390.88 399.50,397.05 399.75,389.44 400.00,390.12 400.25,381.18 400.50,399.46 400.75,382.01 401.00,393.55 401.25,387.02 401.50,391.78 401.75,390.11 402.00,389.66 402.25,392.42 402.50,384.17 402.75,386.11 403.00,392.30 403.25,388.41 403.50,379.27 403.75,387.08 404.00,381.90 404.25,385.29 404.50,395.00 404.75,381.28 405.00,383.36 405.25,387.39 405.50,390.58 405.75,380.41 406.00,390.53 406.25,392.16 406.50,374.84 406.75,390.09 407.00,389.01 407.25,386.82 407.50,391.97 407.75,389.50 408.00,381.42 408.25,386.87 408.50,384.91 408.75,379.94 409.00,377.99 409.25,389.27 409.50,386.17 409.75,377.24 410.00,386.85 410.25,376.51 410.50,386.57 410.75,387.05 411.00,376.09 411.25,387.65 411.50,375.21 411.75,375.30 412.00,374.99 412.25,383.62 412.50,379.56 412.75,373.63 413.00,376.64 413.25,383.63 413.50,380.66 413.75,374.32 414.00,376.65 414.25,383.24 414.50,376.76 414.75,384.75 415.00,378.73 415.25,385.24 415.50,377.87 415.75,383.95 416.00,374.57 416.25,378.07 416.50,372.62 416.75,385.10 417.00,375.66 417.25,383.21 417.50,371.32 417.75,380.50 418.00,379.08 418.25,376.67 418.50,375.42 418.75,382.30 419.00,382.31 419.25,382.69 419.50,381.83 419.75,380.88 420.00,364.62 420.25,379.67 420.50,379.60 420.75,378.23 421.00,372.84 421.25,378.54 421.50,367.52 421.75,369.33 422.00,372.06 422.25,379.07 422.50,374.96 422.75,381.80 423.00,373.77 423.25,379.63 423.50,369.82 423.75,366.88 424.00,373.04 424.25,370.32 424.50,368.42 424.75,370.33 425.00,372.03 425.25,364.21 425.50,368.56 425.75,376.88 426.00,375.27 426.25,371.62 426.50,380.76 426.75,374.14 427.00,377.80 427.25,380.81 427.50,374.10 427.75,365.11 428.00,365.24 428.25,374.51 428.50,372.04 428.75,368.49 429.00,378.45 429.25,377.31 429.50,379.07 429.75,377.12 430.00,376.07 430.25,382.68 430.50,376.31 430.75,370.07 431.00,372.38 431.25,369.39 431.50,382.71 431.75,380.73 432.00,373.64 432.25,374.93 432.50,376.00 432.75,379.66 433.00,386.21 433.25,368.58 433.50,372.20 433.75,377.90 434.00,377.04 434.25,384.41 434.50,384.21 434.75,373.51 435.00,376.50 435.25,373.41 435.50,383.74 435.75,383.50 436.00,385.17 436.25,377.37 436.50,383.52 436.75,377.63 437.00,380.03 437.25,380.30 437.50,383.96 437.75,386.47 438.00,386.94 438.25,377.16 438.50,383.68 438.75,389.46 439.00,380.48 439.25,386.90 439.50,380.35 439.75,375.90 440.00,381.65 440.25,383.45 440.50,377.41 440.75,374.18 441.00,381.45 441.25,379.21 441.50,379.38 441.75,381.48 442.00,384.58 442.25,385.91 442.50,389.04 442.75,392.09 443.00,386.79 443.25,383.37 443.50,391.92 443.75,380.06 444.00,376.46 444.25,382.38 444.50,391.53 444.75,386.52 445.00,381.96 445.25,385.59 445.50,382.06 445.75,379.92 446.00,381.17 446.25,387.49 446.50,391.62 446.75,389.09 447.00,381.62 447.25,391.39 447.50,394.01 447.75,385.96 448.00,385.20 448.25,393.59 448.50,388.41 448.75,381.96 449.00,392.01 449.25,389.43 449.50,394.93 449.75,392.33 450.00,385.30 450.25,386.77 450.50,381.25 450.75,386.48 451.00,387.86 451.25,385.32 451.50,381.18 451.75,382.05 452.00,391.19 452.25,395.75 452.50,395.53 452.75,391.73 453.00,377.98 453.25,387.77 453.50,393.52 453.75,381.61 454.00,396.34 454.25,396.33 454.50,384.41 454.75,394.88 455.00,390.10 455.25,387.52 455.50,381.28 455.75,382.09 456.00,382.80 456.25,393.98 456.50,381.81 456.75,388.63 457.00,383.32 457.25,393.26 457.50,394.34 457.75,385.02 458.00,387.92 458.25,389.54 458.50,388.59 458.75,395.79 459.00,380.96 459.25,385.40 459.50,377.50 459.75,387.88 460.00,391.05 460.25,391.91 460.50,391.40 460.75,388.68 461.00,391.96 461.25,385.33 461.50,392.26 461.75,381.75 462.00,381.50 462.25,391.13 462.50,391.57 462.75,388.18 463.00,389.41 463.25,388.42 463.50,390.89 463.75,381.26 464.00,385.62 464.25,387.66 464.50,384.99 464.75,384.60 465.00,376.57 465.25,384.78 465.50,387.67 465.75,375.69 466.00,392.76 466.25,385.46 466.50,379.18 466.75,390.91 467.00,381.97 467.25,390.11 467.50,383.79 467.75,389.93 468.00,390.73 468.25,386.62 468.50,388.36 468.75,394.91 469.00,378.32 469.25,387.29 469.50,390.61 469.75,386.32 470.00,385.79 470.25,380.53 470.50,387.72 470.75,379.99 471.00,385.11 471.25,382.97 471.50,378.93 471.75,381.08 472.00,390.41 472.25,385.04 472.50,381.95 472.75,385.29 473.00,375.99 473.25,383.87 473.50,379.88 473.75,388.80 474.00,378.86 474.25,379.05 474.50,377.11 474.75,381.29 475.00,377.01 475.25,376.37 475.50,379.29 475.75,385.66 476.00,381.21 476.25,385.63 476.50,380.20 476.75,377.41 477.00,381.46 477.25,379.14 477.50,375.26 477.75,378.54 478.00,379.95 478.25,375.96 478.50,377.79 478.75,370.30 479.00,388.05 479.25,375.49 479.50,380.50 479.75,375.78 480.00,376.12 480.25,383.74 480.50,382.19 480.75,381.38 481.00,371.98 481.25,375.09 481.50,383.52 481.75,377.41 482.00,385.66 482.25,389.12 482.50,374.34 482.75,372.09 483.00,375.58 483.25,374.53 483.50,372.89 483.75,384.60 484.00,379.94 484.25,373.57 484.50,386.33 484.75,374.45 485.00,375.61 485.25,372.59 485.50,378.24 485.75,376.29 486.00,381.66 486.25,370.87 486.50,375.88 486.75,376.33 487.00,381.35 487.25,368.24 487.50,367.73 487.75,369.47 488.00,379.02 488.25,371.46 488.50,377.30 488.75,377.10 489.00,372.72 489.25,376.37 489.50,368.22 489.75,372.15 490.00,371.72 490.25,374.10 490.50,377.71 490.75,370.40 491.00,378.36 491.25,376.69 491.50,376.87 491.75,366.52 492.00,366.05 492.25,369.30 492.50,372.42 492.75,374.80 493.00,376.01 493.25,368.56 493.50,375.15 493.75,369.05 494.00,365.57 494.25,370.07 494.50,368.06 494.75,370.53 495.00,375.97 495.25,372.92 495.50,375.31 495.75,370.48 496.00,366.03 496.25,373.87 496.50,362.81 496.75,358.71 497.00,369.21 497.25,369.20 497.50,369.29 497.75,374.63 498.00,362.58 498.25,370.04 498.50,370.65 498.75,359.59 499.00,371.60 499.25,367.66 499.50,361.78 499.75,372.92 500.00,365.10 500.25,363.09 500.50,370.58 500.75,363.13 501.00,365.72 501.25,363.67 501.50,368.37 501.75,366.33 502.00,365.64 502.25,357.52 502.50,368.08 502.75,369.96 503.00,361.99 503.25,369.18 503.50,371.59 503.75,356.99 504.00,357.27 504.25,360.82 504.50,373.97 504.75,368.29 505.00,362.11 505.25,364.33 505.50,369.81 505.75,365.84 506.00,355.74 506.25,359.66 506.50,360.64 506.75,366.71 507.00,357.20 507.25,354.00 507.50,354.31 507.75,357.95 508.00,361.84 508.25,357.80 508.50,363.64 508.75,360.38 509.00,369.72 509.25,362.67 509.50,366.41 509.75,366.47 510.00,361.07 510.25,357.91 510.50,368.90 510.75,354.29 511.00,359.76 511.25,356.40 511.50,360.07 511.75,360.30 512.00,358.32 512.25,364.94 512.50,357.27 512.75,367.78 513.00,371.19 513.25,362.94 513.50,365.70 513.75,354.68 514.00,362.16 514.25,363.91 514.50,372.90 514.75,372.30 515.00,358.17 515.25,373.84 515.50,365.32 515.75,363.57 516.00,370.13 516.25,377.83 516.50,365.96 516.75,362.07 517.00,373.26 517.25,373.39 517.50,375.60 517.75,365.89 518.00,376.82 518.25,372.28 518.50,368.50 518.75,375.36 519.00,361.09 519.25,371.55 519.50,376.99 519.75,365.95 520.00,372.29 520.25,363.50 520.50,374.45 520.75,367.64 521.00,377.00 521.25,361.62 521.50,373.28 521.75,364.60 522.00,368.05 522.25,379.48 522.50,365.84 522.75,366.46 523.00,371.61 523.25,369.98 523.50,372.39 523.75,371.39 524.00,370.31 524.25,368.29 524.50,375.13 524.75,379.65 525.00,377.13 525.25,371.52 525.50,375.28 525.75,373.25 526.00,376.58 526.25,372.68 526.50,373.38 526.75,380.04 527.00,374.95 527.25,369.96 527.50,377.87 527.75,377.21 528.00,372.74 528.25,373.50 528.50,380.11 528.75,372.25 529.00,368.06 529.25,374.37 529.50,376.78 529.75,367.57 530.00,367.87 530.25,367.79 530.50,377.05 530.75,380.50 531.00,382.13 531.25,377.02 531.50,371.64 531.75,367.76 532.00,372.62 532.25,367.20 532.50,377.10 532.75,369.54 533.00,373.87 533.25,374.37 533.50,383.07 533.75,382.01 534.00,378.74 534.25,368.66 534.50,378.39 534.75,372.94 535.00,382.21 535.25,368.52 535.50,386.75 535.75,381.97 536.00,368.32 536.25,369.95 536.50,380.55 536.75,380.27 537.00,368.43 537.25,381.01 537.50,376.03 537.75,381.19 538.00,364.80 538.25,374.40 538.50,380.23 538.75,383.01 539.00,382.05 539.25,369.16 539.50,371.30 539.75,373.00 540.00,368.67 540.25,369.64 540.50,375.18 540.75,375.48 541.00,372.63 541.25,378.77 541.50,380.88 541.75,380.22 542.00,375.97 542.25,382.18 542.50,371.85 542.75,367.79 543.00,378.10 543.25,370.04 543.50,379.39 543.75,370.22 544.00,372.68 544.25,368.86 544.50,376.14 544.75,369.06 545.00,382.18 545.25,374.50 545.50,380.03 545.75,375.81 546.00,377.97 546.25,365.96 546.50,377.91 546.75,367.48 547.00,375.69 547.25,365.90 547.50,365.60 547.75,371.23 548.00,365.36 548.25,368.94 548.50,371.44 548.75,362.30 549.00,376.17 549.25,364.90 549.50,378.45 549.75,367.78 550.00,378.11 550.25,372.08 550.50,366.14 550.75,373.66 551.00,373.71 551.25,378.72 551.50,376.68 551.75,381.53 552.00,366.36 552.25,366.68 552.50,375.98 552.75,369.22 553.00,367.27 553.25,373.44 553.50,368.90 553.75,375.10 554.00,364.95 554.25,372.50 554.50,370.63 554.75,373.98 555.00,370.56 555.25,365.99 555.50,363.37 555.75,375.56 556.00,363.30 556.25,370.85 556.50,362.14 556.75,370.22 557.00,362.72 557.25,365.04 557.50,369.31 557.75,375.53 558.00,367.45 558.25,373.66 558.50,372.47 558.75,371.55 559.00,375.11 559.25,371.96 559.50,368.92 559.75,363.67 560.00,363.39 560.25,367.34 560.50,370.52 560.75,374.69 561.00,371.68 561.25,369.56 561.50,373.56 561.75,357.85 562.00,367.10 562.25,360.47 562.50,359.81 562.75,365.36 563.00,366.08 563.25,364.27 563.50,358.54 563.75,372.90 564.00,363.39 564.25,369.25 564.50,357.96 564.75,360.94 565.00,363.80" stroke="#eee21c" stroke-width="0.75" fill="none" shape-rendering="auto"/><rect x="303.5" y="401.5" width="9" height="9" fill="#eee21c" stroke="#a89870" stroke-width="1"/><path d="M305 403 L311 403 L308 407.5 Z" fill="#309888"/><path d="M308.5 399.5 H313" stroke="#a9a6a4" stroke-width="1" fill="none"/></svg><svg width="692" height="521" style="position:absolute;left:0;top:0"><defs><radialGradient id="kg" cx="0.45" cy="0.35" r="0.7"><stop offset="0" stop-color="#c4c3bd"/><stop offset="1" stop-color="#9c9c98"/></radialGradient></defs><circle cx="295.6" cy="512" r="8.8" fill="#101828"/><circle cx="294.6" cy="511.2" r="8.7" fill="url(#kg)"/><ellipse cx="297.3" cy="509.4" rx="2.3" ry="2.9" fill="#ecebe4"/><ellipse cx="294.6" cy="508.6" rx="1.1" ry="2.6" fill="#2a2a2a"/></svg>
<div style="position:absolute;left:572px;top:0;width:120px;height:521px;background:#c9c8c4"></div>
<div style="position:absolute;left:572px;top:0;width:1px;height:521px;background:#dcdbd7"></div>
<div style="position:absolute;left:572px;top:39.0px;width:120px;height:1px;background:#8e8d8a"></div>
<div style="position:absolute;left:572px;top:40.0px;width:120px;height:1px;background:#ecebe8"></div>
<div style="position:absolute;left:572px;top:100.0px;width:120px;height:1px;background:#8e8d8a"></div>
<div style="position:absolute;left:572px;top:101.0px;width:120px;height:1px;background:#ecebe8"></div>
<div style="position:absolute;left:572px;top:161.0px;width:120px;height:1px;background:#8e8d8a"></div>
<div style="position:absolute;left:572px;top:162.0px;width:120px;height:1px;background:#ecebe8"></div>
<div style="position:absolute;left:572px;top:221.0px;width:120px;height:1px;background:#8e8d8a"></div>
<div style="position:absolute;left:572px;top:222.0px;width:120px;height:1px;background:#ecebe8"></div>
<div style="position:absolute;left:572px;top:281.0px;width:120px;height:1px;background:#8e8d8a"></div>
<div style="position:absolute;left:572px;top:282.0px;width:120px;height:1px;background:#ecebe8"></div>
<div style="position:absolute;left:572px;top:341.0px;width:120px;height:1px;background:#8e8d8a"></div>
<div style="position:absolute;left:572px;top:342.0px;width:120px;height:1px;background:#ecebe8"></div>
<div style="position:absolute;left:572px;top:401.0px;width:120px;height:1px;background:#8e8d8a"></div>
<div style="position:absolute;left:572px;top:402.0px;width:120px;height:1px;background:#ecebe8"></div>
<div style="position:absolute;left:572px;top:460.0px;width:120px;height:1px;background:#8e8d8a"></div>
<div style="position:absolute;left:572px;top:461.0px;width:120px;height:1px;background:#ecebe8"></div>
<div style="position:absolute;left:576px;top:76.0px;width:114px;height:19.5px;background:#fbfbfb;border-top:2px solid #3a3a3a;border-left:2px solid #3a3a3a;border-bottom:1px solid #eeeeea;border-right:1px solid #b4b3b0;"></div>
<div style="position:absolute;left:576px;top:136.0px;width:114px;height:21.0px;background:#cecdc9;border-top:1px solid #9a9996;border-left:1px solid #9a9996;border-bottom:1px solid #eeeeea;border-right:1px solid #b4b3b0;box-shadow:inset 1px 1px 0 #d6d6d2;"></div>
<div style="position:absolute;left:576px;top:196.0px;width:114px;height:20.0px;background:#cecdc9;border-top:1px solid #9a9996;border-left:1px solid #9a9996;border-bottom:1px solid #eeeeea;border-right:1px solid #b4b3b0;box-shadow:inset 1px 1px 0 #d6d6d2;"></div>
<div style="position:absolute;left:576px;top:257.0px;width:114px;height:18.0px;background:#fbfbfb;border-top:1px solid #9a9996;border-left:1px solid #9a9996;border-bottom:1px solid #eeeeea;border-right:1px solid #b4b3b0;box-shadow:inset 1px 1px 0 #d6d6d2;"></div>
<div style="position:absolute;left:576px;top:318.0px;width:114px;height:17.0px;background:#fbfbfb;border-top:1px solid #9a9996;border-left:1px solid #9a9996;border-bottom:1px solid #eeeeea;border-right:1px solid #b4b3b0;box-shadow:inset 1px 1px 0 #d6d6d2;"></div>
<div style="position:absolute;left:576px;top:378.5px;width:114px;height:16.5px;background:#fbfbfb;border-top:1px solid #9a9996;border-left:1px solid #9a9996;border-bottom:1px solid #eeeeea;border-right:1px solid #b4b3b0;box-shadow:inset 1px 1px 0 #d6d6d2;"></div>
<div style="position:absolute;left:578px;top:78px;width:30px;height:16px;background:#2a5fbf"></div>
<div style="position:absolute;left:680px;top:46px;width:12px;height:10px;background:#d8d8d4;border-bottom:1.5px solid #202020"></div>
<div style="position:absolute;left:680px;top:59px;width:12px;height:10px;background:#d8d8d4;border-bottom:1.5px solid #202020"></div>
<svg style="position:absolute;left:680px;top:46px" width="12" height="24"><path d="M3.5 6 L8.5 6 L6 3 Z" fill="#101010"/><path d="M3.5 16 L8.5 16 L6 19 Z" fill="#101010"/></svg>
<div class="t" style="top:1.85px;font-size:14.00px;line-height:14.00px;color:#dde1f4;font-weight:700;letter-spacing:0.50px;font-family:'Liberation Serif',serif;left:5.50px;">Tektronix</div>
<div class="t" style="top:3.54px;font-size:12.00px;line-height:12.00px;color:#dfe3f6;font-weight:700;left:74.00px;">RSA 3303A</div>
<div class="t" style="top:2.90px;font-size:13.00px;line-height:13.00px;color:#dfe3f6;left:226.50px;">1/4/04 9:27:02 PM</div>
<div class="t" style="top:2.50px;font-size:13.00px;line-height:13.00px;color:#101010;font-weight:700;left:509.00px;">PAUSE</div>
<div class="t" style="top:29.07px;font-size:13.50px;line-height:13.50px;color:#e2deda;letter-spacing:0.45px;-webkit-text-stroke:0.12px #e2deda;left:5.00px;">Frequency:</div>
<div class="t" style="top:29.83px;font-size:12.60px;line-height:12.60px;color:#c2beba;left:87.00px;">462.6875 MHz</div>
<div class="t" style="top:44.37px;font-size:13.50px;line-height:13.50px;color:#e2deda;letter-spacing:0.45px;-webkit-text-stroke:0.12px #e2deda;left:5.00px;">Span:</div>
<div class="t" style="top:45.13px;font-size:12.60px;line-height:12.60px;color:#c2beba;left:87.00px;">5 MHz</div>
<div class="t" style="top:59.77px;font-size:13.50px;line-height:13.50px;color:#e2deda;letter-spacing:0.90px;-webkit-text-stroke:0.12px #e2deda;left:5.00px;">Input Att:</div>
<div class="t" style="top:60.53px;font-size:12.60px;line-height:12.60px;color:#c2beba;left:87.00px;">20 dB</div>
<div class="t" style="top:29.07px;font-size:13.50px;line-height:13.50px;color:#e2deda;letter-spacing:0.60px;-webkit-text-stroke:0.12px #e2deda;left:292.50px;">Acquisition Length:</div>
<div class="t" style="top:29.83px;font-size:12.60px;line-height:12.60px;color:#c2beba;left:425.50px;">320 &micro;s</div>
<div class="t" style="top:81.60px;font-size:13.00px;line-height:13.00px;color:#c2beba;left:6.00px;">Marker: -3.818125 ms</div>
<div class="t" style="top:93.80px;font-size:13.00px;line-height:13.00px;color:#c2beba;left:54.50px;">-3.684 dBm</div>
<div class="t" style="top:108.90px;font-size:13.00px;line-height:13.00px;color:#c2beba;right:647.50px;">0</div>
<div class="t" style="top:121.60px;font-size:13.00px;line-height:13.00px;color:#c2beba;right:647.50px;">dBm</div>
<div class="t" style="top:168.50px;font-size:13.00px;line-height:13.00px;color:#c2beba;right:647.50px;">10</div>
<div class="t" style="top:181.50px;font-size:13.00px;line-height:13.00px;color:#c2beba;right:646.50px;">dB/</div>
<div class="t" style="top:225.80px;font-size:13.00px;line-height:13.00px;color:#c2beba;right:647.50px;">-100</div>
<div class="t" style="top:238.00px;font-size:13.00px;line-height:13.00px;color:#c2beba;right:647.50px;">dBm</div>
<div class="t" style="top:258.00px;font-size:13.00px;line-height:13.00px;color:#c2beba;left:5.00px;">Timing:</div>
<div class="t" style="top:275.80px;font-size:13.00px;line-height:13.00px;color:#c2beba;left:49.50px;">Start: -34.826094 ms</div>
<div class="t" style="top:275.80px;font-size:13.00px;line-height:13.00px;color:#c2beba;right:410.00px;">Scale: 3.504 ms/</div>
<div class="t" style="top:81.60px;font-size:13.00px;line-height:13.00px;color:#c2beba;left:294.00px;">Marker: 462.54375 MHz</div>
<div class="t" style="top:93.80px;font-size:13.00px;line-height:13.00px;color:#c2beba;left:340.00px;">-4.482 dBm</div>
<div class="t" style="top:108.60px;font-size:13.00px;line-height:13.00px;color:#c2beba;right:360.50px;">0</div>
<div class="t" style="top:122.00px;font-size:13.00px;line-height:13.00px;color:#c2beba;right:360.00px;">dBm</div>
<div class="t" style="top:179.80px;font-size:13.00px;line-height:13.00px;color:#c2beba;right:360.50px;">10</div>
<div class="t" style="top:192.40px;font-size:13.00px;line-height:13.00px;color:#c2beba;right:359.50px;">dB/</div>
<div class="t" style="top:247.90px;font-size:13.00px;line-height:13.00px;color:#c2beba;right:360.50px;">-100</div>
<div class="t" style="top:260.00px;font-size:13.00px;line-height:13.00px;color:#c2beba;right:360.00px;">dBm</div>
<div class="t" style="top:275.70px;font-size:13.00px;line-height:13.00px;color:#c2beba;left:336.50px;">Center: 462.6875 MHz</div>
<div class="t" style="top:275.95px;font-size:12.70px;line-height:12.70px;color:#c2beba;right:121.50px;">Span: 5 MHz</div>
<div class="t" style="top:292.50px;font-size:13.00px;line-height:13.00px;color:#c2beba;left:6.00px;">Marker: -3.818125 ms</div>
<div class="t" style="top:305.00px;font-size:13.00px;line-height:13.00px;color:#c2beba;left:54.00px;">-151.096053078 kHz</div>
<div class="t" style="top:319.00px;font-size:13.00px;line-height:13.00px;color:#c2beba;right:647.50px;">-125</div>
<div class="t" style="top:332.40px;font-size:13.00px;line-height:13.00px;color:#c2beba;right:647.50px;">kHz</div>
<div class="t" style="top:390.20px;font-size:13.00px;line-height:13.00px;color:#c2beba;right:647.50px;">5</div>
<div class="t" style="top:403.30px;font-size:13.00px;line-height:13.00px;color:#c2beba;right:646.50px;">kHz/</div>
<div class="t" style="top:458.50px;font-size:13.00px;line-height:13.00px;color:#c2beba;right:647.50px;">-175</div>
<div class="t" style="top:471.80px;font-size:13.00px;line-height:13.00px;color:#c2beba;right:647.50px;">kHz</div>
<div class="t" style="top:486.30px;font-size:13.00px;line-height:13.00px;color:#c2beba;left:49.50px;">Start: -4.318125 ms</div>
<div class="t" style="top:486.50px;font-size:13.00px;line-height:13.00px;color:#c2beba;right:121.50px;">Scale: 100 &micro;s/</div>
<div class="t" style="top:504.11px;font-size:14.40px;line-height:14.40px;color:#e6ebf8;letter-spacing:0.08px;-webkit-text-stroke:0.20px #e6ebf8;left:2.00px;">Transient: Frequency versus Time</div>
<div class="t" style="top:504.01px;font-size:14.40px;line-height:14.40px;color:#e6ebf8;letter-spacing:0.12px;-webkit-text-stroke:0.20px #e6ebf8;left:308.30px;">Acquisition Length (&micro;s):</div>
<div class="t" style="top:504.01px;font-size:14.40px;line-height:14.40px;color:#e6ebf8;letter-spacing:0.30px;-webkit-text-stroke:0.20px #e6ebf8;left:476.00px;">320</div>
<div class="t" style="top:2.63px;font-size:13.20px;line-height:13.20px;color:#8f8e8b;font-weight:700;font-family:'Liberation Serif',serif;left:577.30px;">TIMING</div>
<div class="t" style="top:24.32px;font-size:13.80px;line-height:13.80px;color:#111111;letter-spacing:0.05px;-webkit-text-stroke:0.60px #111111;left:575.60px;">Cancel - Back</div>
<div class="t" style="top:43.52px;font-size:13.80px;line-height:13.80px;color:#111111;letter-spacing:0.40px;-webkit-text-stroke:0.60px #111111;left:575.50px;">Acquisition</div>
<div class="t" style="top:58.52px;font-size:13.80px;line-height:13.80px;color:#111111;letter-spacing:0.40px;-webkit-text-stroke:0.60px #111111;left:575.50px;">Length (s)</div>
<div class="t" style="top:103.92px;font-size:13.80px;line-height:13.80px;color:#111111;letter-spacing:0.40px;-webkit-text-stroke:0.60px #111111;left:575.50px;">Acquisition</div>
<div class="t" style="top:119.12px;font-size:13.80px;line-height:13.80px;color:#111111;letter-spacing:0.40px;-webkit-text-stroke:0.60px #111111;left:575.50px;">History</div>
<div class="t" style="top:163.92px;font-size:13.80px;line-height:13.80px;color:#111111;letter-spacing:0.25px;-webkit-text-stroke:0.60px #111111;left:575.50px;">Spectrum Length</div>
<div class="t" style="top:179.12px;font-size:13.80px;line-height:13.80px;color:#111111;letter-spacing:0.60px;-webkit-text-stroke:0.60px #111111;left:575.50px;">(s)</div>
<div class="t" style="top:224.42px;font-size:13.80px;line-height:13.80px;color:#111111;letter-spacing:0.35px;-webkit-text-stroke:0.60px #111111;left:575.50px;">Spectrum Offset</div>
<div class="t" style="top:239.12px;font-size:13.80px;line-height:13.80px;color:#111111;letter-spacing:0.60px;-webkit-text-stroke:0.60px #111111;left:575.50px;">(s)</div>
<div class="t" style="top:284.82px;font-size:13.80px;line-height:13.80px;color:#111111;letter-spacing:0.25px;-webkit-text-stroke:0.60px #111111;left:575.50px;">Analysis Length</div>
<div class="t" style="top:300.32px;font-size:13.80px;line-height:13.80px;color:#111111;letter-spacing:0.60px;-webkit-text-stroke:0.60px #111111;left:575.50px;">(s)</div>
<div class="t" style="top:345.12px;font-size:13.80px;line-height:13.80px;color:#111111;letter-spacing:0.45px;-webkit-text-stroke:0.60px #111111;left:575.50px;">Analysis Offset</div>
<div class="t" style="top:360.32px;font-size:13.80px;line-height:13.80px;color:#111111;letter-spacing:0.60px;-webkit-text-stroke:0.60px #111111;left:575.50px;">(s)</div>
<div class="t" style="top:79.72px;font-size:12.50px;line-height:12.50px;color:#dfe6f6;left:578.50px;">320&micro;</div>
<div class="t" style="top:140.92px;font-size:12.50px;line-height:12.50px;color:#2a2a2a;left:577.50px;">0</div>
<div class="t" style="top:201.42px;font-size:12.50px;line-height:12.50px;color:#2a2a2a;left:577.50px;">160&micro;</div>
<div class="t" style="top:260.92px;font-size:12.50px;line-height:12.50px;color:#111111;left:577.50px;">24m</div>
<div class="t" style="top:321.92px;font-size:12.50px;line-height:12.50px;color:#111111;left:577.50px;">1m</div>
<div class="t" style="top:382.22px;font-size:12.50px;line-height:12.50px;color:#111111;left:577.50px;">23.5m</div>
</div></body></html>
